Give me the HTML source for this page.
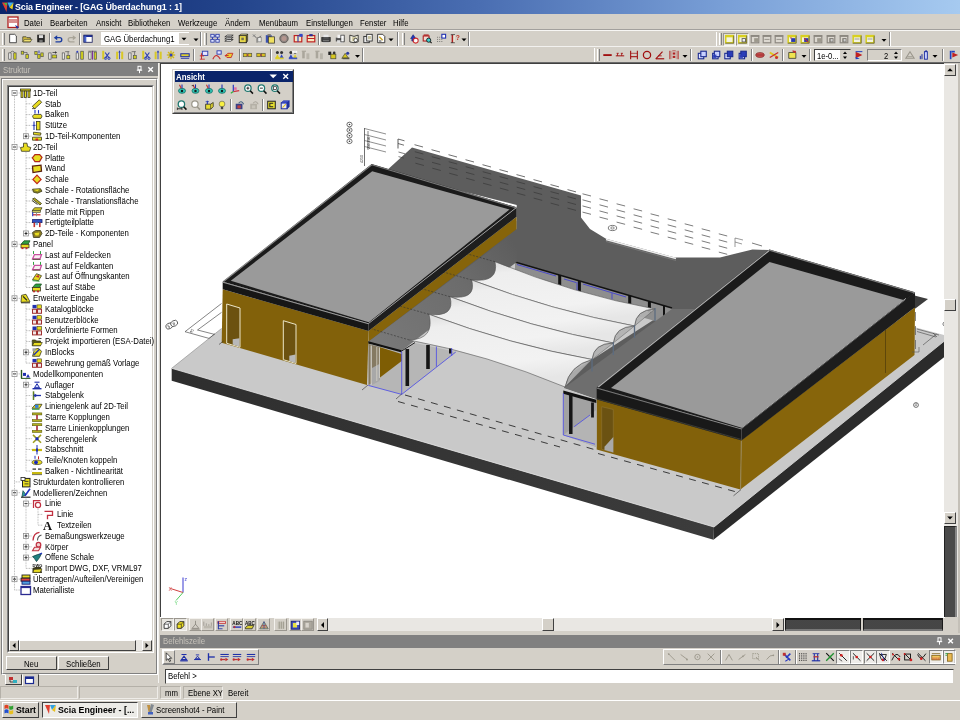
<!DOCTYPE html><html><head><meta charset="utf-8"><title>Scia Engineer - [GAG Überdachung1 : 1]</title><style>
html,body{margin:0;padding:0;}html{background:#d4d0c8;}
body{width:960px;height:720px;overflow:hidden;background:#d4d0c8;position:relative;filter:blur(0.42px);font-family:"Liberation Sans",sans-serif;}
div{position:absolute;box-sizing:border-box;}
.t{white-space:nowrap;line-height:10px;height:10px;}
.raised{border:1px solid;border-color:#fff #404040 #404040 #fff;background:#d4d0c8;}
.raised2{border:1px solid;border-color:#fff #808080 #808080 #fff;background:#d4d0c8;}
.sunken{border:1px solid;border-color:#9a968e #f6f5f2 #f6f5f2 #9a968e;}
.sep{width:2px;border-left:1px solid #808080;border-right:1px solid #fff;}
.grip{width:3px;border-left:1px solid #fff;border-right:1px solid #808080;}
svg{position:absolute;left:0;top:0;overflow:visible;}
</style></head><body>
<div style="left:0px;top:0px;width:960px;height:14px;background:linear-gradient(90deg,#0a246a 0%,#24458c 25%,#4a6eb2 50%,#789ed6 75%,#a6caf0 100%);"></div>
<div class="t" style="left:15px;top:2px;font-size:9.57px;color:#fff;transform:scaleX(0.93);transform-origin:0 50%;font-weight:bold;letter-spacing:-0.1px;">Scia Engineer - [GAG Überdachung1 : 1]</div>
<div style="left:0px;top:14px;width:960px;height:16px;background:#d4d0c8;"></div>
<div style="left:0px;top:29px;width:960px;height:1px;background:#808080;opacity:.6"></div>
<div style="left:0px;top:30px;width:960px;height:1px;background:#fff;opacity:.8"></div>
<div class="t" style="left:24px;top:18px;font-size:8.81px;color:#000;transform:scaleX(0.885);transform-origin:0 50%;">Datei</div>
<div class="t" style="left:50px;top:18px;font-size:8.81px;color:#000;transform:scaleX(0.885);transform-origin:0 50%;">Bearbeiten</div>
<div class="t" style="left:95.5px;top:18px;font-size:8.81px;color:#000;transform:scaleX(0.885);transform-origin:0 50%;">Ansicht</div>
<div class="t" style="left:128px;top:18px;font-size:8.81px;color:#000;transform:scaleX(0.885);transform-origin:0 50%;">Bibliotheken</div>
<div class="t" style="left:178px;top:18px;font-size:8.81px;color:#000;transform:scaleX(0.885);transform-origin:0 50%;">Werkzeuge</div>
<div class="t" style="left:225px;top:18px;font-size:8.81px;color:#000;transform:scaleX(0.885);transform-origin:0 50%;">Ändern</div>
<div class="t" style="left:258.5px;top:18px;font-size:8.81px;color:#000;transform:scaleX(0.885);transform-origin:0 50%;">Menübaum</div>
<div class="t" style="left:306px;top:18px;font-size:8.81px;color:#000;transform:scaleX(0.885);transform-origin:0 50%;">Einstellungen</div>
<div class="t" style="left:359.5px;top:18px;font-size:8.81px;color:#000;transform:scaleX(0.885);transform-origin:0 50%;">Fenster</div>
<div class="t" style="left:393px;top:18px;font-size:8.81px;color:#000;transform:scaleX(0.885);transform-origin:0 50%;">Hilfe</div>
<div style="left:0px;top:46px;width:960px;height:1px;background:#fff;opacity:.7"></div>
<div style="left:0px;top:62px;width:960px;height:1px;background:#6a6a6a;"></div>
<div class="grip" style="left:2px;top:33px;width:3px;height:12px;"></div>
<div class="sep" style="left:49px;top:33px;width:2px;height:12px;"></div>
<div class="sep" style="left:79px;top:33px;width:2px;height:12px;"></div>
<div style="left:101px;top:32px;width:88px;height:13px;background:#fff;"></div>
<div class="t" style="left:104px;top:34px;font-size:8.81px;color:#000;transform:scaleX(0.885);transform-origin:0 50%;">GAG Überdachung1</div>
<div style="left:179px;top:33px;width:10px;height:11px;background:#d4d0c8;"></div>
<div style="left:200px;top:32px;width:1px;height:14px;background:#808080"></div>
<div style="left:201px;top:32px;width:1px;height:14px;background:#fff"></div>
<div class="grip" style="left:204px;top:33px;width:3px;height:12px;"></div>
<div class="sep" style="left:318px;top:33px;width:2px;height:12px;"></div>
<div style="left:397px;top:32px;width:1px;height:14px;background:#808080"></div>
<div style="left:398px;top:32px;width:1px;height:14px;background:#fff"></div>
<div class="grip" style="left:402px;top:33px;width:3px;height:12px;"></div>
<div style="left:468px;top:32px;width:1px;height:14px;background:#808080"></div>
<div style="left:469px;top:32px;width:1px;height:14px;background:#fff"></div>
<div style="left:716px;top:32px;width:1px;height:14px;background:#fff"></div>
<div class="grip" style="left:719px;top:33px;width:3px;height:12px;"></div>
<div class="sunken" style="left:723px;top:33px;width:13px;height:13px;background:#e4e2dc;"></div>
<div class="sunken" style="left:736px;top:33px;width:13px;height:13px;background:#e4e2dc;"></div>
<div style="left:889px;top:32px;width:1px;height:14px;background:#808080"></div>
<div style="left:890px;top:32px;width:1px;height:14px;background:#fff"></div>
<div class="grip" style="left:2px;top:49px;width:3px;height:12px;"></div>
<div class="sep" style="left:193px;top:49px;width:2px;height:12px;"></div>
<div class="sep" style="left:239px;top:49px;width:2px;height:12px;"></div>
<div class="sep" style="left:270px;top:49px;width:2px;height:12px;"></div>
<div style="left:362px;top:48px;width:1px;height:14px;background:#808080"></div>
<div style="left:363px;top:48px;width:1px;height:14px;background:#fff"></div>
<div style="left:594px;top:48px;width:1px;height:14px;background:#fff"></div>
<div class="grip" style="left:597px;top:49px;width:3px;height:12px;"></div>
<div class="sep" style="left:690px;top:49px;width:2px;height:12px;"></div>
<div class="sep" style="left:751px;top:49px;width:2px;height:12px;"></div>
<div class="sep" style="left:782px;top:49px;width:2px;height:12px;"></div>
<div class="sep" style="left:809px;top:49px;width:2px;height:12px;"></div>
<div class="sep" style="left:942px;top:49px;width:2px;height:12px;"></div>
<div style="left:814px;top:49px;width:37px;height:12px;background:#fff;border:1px solid #404040;border-right-color:#d4d0c8;border-bottom-color:#d4d0c8;"></div>
<div class="t" style="left:817px;top:50.5px;font-size:8.60px;color:#000;transform:scaleX(0.885);transform-origin:0 50%;">1e-0...</div>
<div style="left:840px;top:50px;width:10px;height:10px;background:#d4d0c8;"></div>
<div style="left:867px;top:49px;width:35px;height:12px;background:#d4d0c8;border:1px solid #808080;border-right-color:#fff;border-bottom-color:#fff;"></div>
<div class="t" style="left:884px;top:50.5px;font-size:8.60px;color:#000;transform:scaleX(0.885);transform-origin:0 50%;">2</div>
<div style="left:891px;top:50px;width:10px;height:10px;background:#d4d0c8;"></div>
<div style="left:0px;top:63px;width:158px;height:13px;background:#808080;"></div>
<div class="t" style="left:3px;top:64.5px;font-size:8.81px;color:#c6c2ba;transform:scaleX(0.885);transform-origin:0 50%;">Struktur</div>
<div style="left:1px;top:78px;width:157px;height:597px;border:1px solid;border-color:#808080 #fff #fff #808080;"></div>
<div style="left:2px;top:79px;width:155px;height:595px;border:1px solid;border-color:#fff #808080 #808080 #fff;"></div>
<div style="left:7px;top:85px;width:147px;height:568px;border:1px solid;border-color:#808080 #fff #fff #808080;background:#fff;"></div>
<div style="left:8px;top:86px;width:145px;height:566px;border:1px solid;border-color:#404040 #d4d0c8 #d4d0c8 #404040;background:#fff;"></div>
<div style="left:9px;top:640px;width:143px;height:11px;background:#e9e7e3;"></div>
<div class="raised" style="left:9px;top:640px;width:10px;height:11px;"></div>
<div class="raised" style="left:142px;top:640px;width:10px;height:11px;"></div>
<div class="raised" style="left:19px;top:640px;width:117px;height:11px;"></div>
<div class="raised" style="left:6px;top:656px;width:51px;height:14px;"></div>
<div class="raised" style="left:58px;top:656px;width:51px;height:14px;"></div>
<div class="t" style="left:24px;top:658.5px;font-size:8.81px;color:#000;transform:scaleX(0.885);transform-origin:0 50%;">Neu</div>
<div class="t" style="left:66px;top:658.5px;font-size:8.81px;color:#000;transform:scaleX(0.885);transform-origin:0 50%;">Schließen</div>
<div style="left:5px;top:674px;width:17px;height:11px;border:1px solid;border-color:#d4d0c8 #404040 #404040 #fff;background:#d4d0c8;"></div>
<div style="left:22px;top:674px;width:17px;height:12.5px;border:1px solid;border-color:#d4d0c8 #404040 #404040 #fff;background:#d4d0c8;"></div>
<div class="t" style="left:33px;top:87.8px;font-size:8.81px;color:#000;transform:scaleX(0.885);transform-origin:0 50%;">1D-Teil</div>
<div class="t" style="left:44.5px;top:98.604px;font-size:8.81px;color:#000;transform:scaleX(0.885);transform-origin:0 50%;">Stab</div>
<div class="t" style="left:44.5px;top:109.408px;font-size:8.81px;color:#000;transform:scaleX(0.885);transform-origin:0 50%;">Balken</div>
<div class="t" style="left:44.5px;top:120.212px;font-size:8.81px;color:#000;transform:scaleX(0.885);transform-origin:0 50%;">Stütze</div>
<div class="t" style="left:44.5px;top:131.01600000000002px;font-size:8.81px;color:#000;transform:scaleX(0.885);transform-origin:0 50%;">1D-Teil-Komponenten</div>
<div class="t" style="left:33px;top:141.82000000000002px;font-size:8.81px;color:#000;transform:scaleX(0.885);transform-origin:0 50%;">2D-Teil</div>
<div class="t" style="left:44.5px;top:152.62400000000002px;font-size:8.81px;color:#000;transform:scaleX(0.885);transform-origin:0 50%;">Platte</div>
<div class="t" style="left:44.5px;top:163.428px;font-size:8.81px;color:#000;transform:scaleX(0.885);transform-origin:0 50%;">Wand</div>
<div class="t" style="left:44.5px;top:174.23200000000003px;font-size:8.81px;color:#000;transform:scaleX(0.885);transform-origin:0 50%;">Schale</div>
<div class="t" style="left:44.5px;top:185.036px;font-size:8.81px;color:#000;transform:scaleX(0.885);transform-origin:0 50%;">Schale - Rotationsfläche</div>
<div class="t" style="left:44.5px;top:195.84000000000003px;font-size:8.81px;color:#000;transform:scaleX(0.885);transform-origin:0 50%;">Schale - Translationsfläche</div>
<div class="t" style="left:44.5px;top:206.644px;font-size:8.81px;color:#000;transform:scaleX(0.885);transform-origin:0 50%;">Platte mit Rippen</div>
<div class="t" style="left:44.5px;top:217.448px;font-size:8.81px;color:#000;transform:scaleX(0.885);transform-origin:0 50%;">Fertigteilplatte</div>
<div class="t" style="left:44.5px;top:228.252px;font-size:8.81px;color:#000;transform:scaleX(0.885);transform-origin:0 50%;">2D-Teile - Komponenten</div>
<div class="t" style="left:33px;top:239.056px;font-size:8.81px;color:#000;transform:scaleX(0.885);transform-origin:0 50%;">Panel</div>
<div class="t" style="left:44.5px;top:249.86px;font-size:8.81px;color:#000;transform:scaleX(0.885);transform-origin:0 50%;">Last auf Feldecken</div>
<div class="t" style="left:44.5px;top:260.66400000000004px;font-size:8.81px;color:#000;transform:scaleX(0.885);transform-origin:0 50%;">Last auf Feldkanten</div>
<div class="t" style="left:44.5px;top:271.468px;font-size:8.81px;color:#000;transform:scaleX(0.885);transform-origin:0 50%;">Last auf Öffnungskanten</div>
<div class="t" style="left:44.5px;top:282.272px;font-size:8.81px;color:#000;transform:scaleX(0.885);transform-origin:0 50%;">Last auf Stäbe</div>
<div class="t" style="left:33px;top:293.076px;font-size:8.81px;color:#000;transform:scaleX(0.885);transform-origin:0 50%;">Erweiterte Eingabe</div>
<div class="t" style="left:44.5px;top:303.88000000000005px;font-size:8.81px;color:#000;transform:scaleX(0.885);transform-origin:0 50%;">Katalogblöcke</div>
<div class="t" style="left:44.5px;top:314.684px;font-size:8.81px;color:#000;transform:scaleX(0.885);transform-origin:0 50%;">Benutzerblöcke</div>
<div class="t" style="left:44.5px;top:325.488px;font-size:8.81px;color:#000;transform:scaleX(0.885);transform-origin:0 50%;">Vordefinierte Formen</div>
<div class="t" style="left:44.5px;top:336.29200000000003px;font-size:8.81px;color:#000;transform:scaleX(0.885);transform-origin:0 50%;">Projekt importieren (ESA-Datei)</div>
<div class="t" style="left:44.5px;top:347.096px;font-size:8.81px;color:#000;transform:scaleX(0.885);transform-origin:0 50%;">InBlocks</div>
<div class="t" style="left:44.5px;top:357.90000000000003px;font-size:8.81px;color:#000;transform:scaleX(0.885);transform-origin:0 50%;">Bewehrung gemäß Vorlage</div>
<div class="t" style="left:33px;top:368.704px;font-size:8.81px;color:#000;transform:scaleX(0.885);transform-origin:0 50%;">Modellkomponenten</div>
<div class="t" style="left:44.5px;top:379.50800000000004px;font-size:8.81px;color:#000;transform:scaleX(0.885);transform-origin:0 50%;">Auflager</div>
<div class="t" style="left:44.5px;top:390.312px;font-size:8.81px;color:#000;transform:scaleX(0.885);transform-origin:0 50%;">Stabgelenk</div>
<div class="t" style="left:44.5px;top:401.11600000000004px;font-size:8.81px;color:#000;transform:scaleX(0.885);transform-origin:0 50%;">Liniengelenk auf 2D-Teil</div>
<div class="t" style="left:44.5px;top:411.92px;font-size:8.81px;color:#000;transform:scaleX(0.885);transform-origin:0 50%;">Starre Kopplungen</div>
<div class="t" style="left:44.5px;top:422.72400000000005px;font-size:8.81px;color:#000;transform:scaleX(0.885);transform-origin:0 50%;">Starre Linienkopplungen</div>
<div class="t" style="left:44.5px;top:433.528px;font-size:8.81px;color:#000;transform:scaleX(0.885);transform-origin:0 50%;">Scherengelenk</div>
<div class="t" style="left:44.5px;top:444.332px;font-size:8.81px;color:#000;transform:scaleX(0.885);transform-origin:0 50%;">Stabschnitt</div>
<div class="t" style="left:44.5px;top:455.136px;font-size:8.81px;color:#000;transform:scaleX(0.885);transform-origin:0 50%;">Teile/Knoten koppeln</div>
<div class="t" style="left:44.5px;top:465.94px;font-size:8.81px;color:#000;transform:scaleX(0.885);transform-origin:0 50%;">Balken - Nichtlinearität</div>
<div class="t" style="left:33px;top:476.744px;font-size:8.81px;color:#000;transform:scaleX(0.885);transform-origin:0 50%;">Strukturdaten kontrollieren</div>
<div class="t" style="left:33px;top:487.548px;font-size:8.81px;color:#000;transform:scaleX(0.885);transform-origin:0 50%;">Modellieren/Zeichnen</div>
<div class="t" style="left:44.5px;top:498.35200000000003px;font-size:8.81px;color:#000;transform:scaleX(0.885);transform-origin:0 50%;">Linie</div>
<div class="t" style="left:56.5px;top:509.156px;font-size:8.81px;color:#000;transform:scaleX(0.885);transform-origin:0 50%;">Linie</div>
<div class="t" style="left:56.5px;top:519.96px;font-size:8.81px;color:#000;transform:scaleX(0.885);transform-origin:0 50%;">Textzeilen</div>
<div class="t" style="left:44.5px;top:530.7639999999999px;font-size:8.81px;color:#000;transform:scaleX(0.885);transform-origin:0 50%;">Bemaßungswerkzeuge</div>
<div class="t" style="left:44.5px;top:541.568px;font-size:8.81px;color:#000;transform:scaleX(0.885);transform-origin:0 50%;">Körper</div>
<div class="t" style="left:44.5px;top:552.372px;font-size:8.81px;color:#000;transform:scaleX(0.885);transform-origin:0 50%;">Offene Schale</div>
<div class="t" style="left:44.5px;top:563.1759999999999px;font-size:8.81px;color:#000;transform:scaleX(0.885);transform-origin:0 50%;">Import DWG, DXF, VRML97</div>
<div class="t" style="left:33px;top:573.98px;font-size:8.81px;color:#000;transform:scaleX(0.885);transform-origin:0 50%;">Übertragen/Aufteilen/Vereinigen</div>
<div class="t" style="left:33px;top:584.784px;font-size:8.81px;color:#000;transform:scaleX(0.885);transform-origin:0 50%;">Materialliste</div>
<div style="left:160px;top:63px;width:784px;height:570px;background:#d4d0c8;border-left:1px solid #404040;"></div>
<div style="left:160px;top:63px;width:784px;height:555px;background:#fff;border:1px solid #404040;border-right:none;border-bottom:none;"></div>
<div style="left:158px;top:63px;width:1px;height:620px;background:#f4f3f0;"></div>
<div style="left:944px;top:64px;width:14.3px;height:554px;background:#e9e7e3;"></div>
<div class="raised" style="left:944px;top:64px;width:12px;height:12px;"></div>
<div class="raised" style="left:944px;top:298.5px;width:12px;height:12px;"></div>
<div class="raised" style="left:944px;top:512px;width:12px;height:12px;"></div>
<div style="left:944px;top:526px;width:12.5px;height:92px;background:repeating-linear-gradient(0deg,#3a3a3a 0,#5a5a5a 1px,#3a3a3a 2px);border:1px solid #222;border-right:2px solid #888;"></div>
<div style="left:958.3px;top:63px;width:2px;height:570px;background:#c4c0b8;"></div>
<div style="left:159px;top:617px;width:799px;height:16px;background:#d4d0c8;"></div>
<div style="left:160px;top:617px;width:785px;height:1px;background:#fff;"></div>
<div class="sunken" style="left:161px;top:618px;width:12.5px;height:13px;background:#e6e4de;"></div>
<div class="sunken" style="left:174px;top:618px;width:13px;height:13px;background:#e6e4de;"></div>
<div style="left:188.9px;top:618.3px;width:13px;height:13px;border:1px solid;border-color:#f4f2ee #9a968e #9a968e #f4f2ee;"></div>
<div style="left:201.4px;top:618.3px;width:13px;height:13px;border:1px solid;border-color:#f4f2ee #9a968e #9a968e #f4f2ee;"></div>
<div style="left:215.1px;top:618.3px;width:13px;height:13px;border:1px solid;border-color:#f4f2ee #9a968e #9a968e #f4f2ee;"></div>
<div style="left:230.4px;top:618.3px;width:13px;height:13px;border:1px solid;border-color:#f4f2ee #9a968e #9a968e #f4f2ee;"></div>
<div style="left:243.0px;top:618.3px;width:13px;height:13px;border:1px solid;border-color:#f4f2ee #9a968e #9a968e #f4f2ee;"></div>
<div style="left:257.4px;top:618.3px;width:13px;height:13px;border:1px solid;border-color:#f4f2ee #9a968e #9a968e #f4f2ee;"></div>
<div style="left:274.4px;top:618.3px;width:13px;height:13px;border:1px solid;border-color:#f4f2ee #9a968e #9a968e #f4f2ee;"></div>
<div style="left:288.79999999999995px;top:618.3px;width:13px;height:13px;border:1px solid;border-color:#f4f2ee #9a968e #9a968e #f4f2ee;"></div>
<div style="left:301.4px;top:618.3px;width:13px;height:13px;border:1px solid;border-color:#f4f2ee #9a968e #9a968e #f4f2ee;"></div>
<div style="left:317px;top:618px;width:468px;height:13px;background:#e9e7e3;"></div>
<div class="raised" style="left:317px;top:618px;width:11px;height:13px;"></div>
<div class="raised" style="left:542px;top:618px;width:12px;height:13px;"></div>
<div class="raised" style="left:772px;top:618px;width:12px;height:13px;"></div>
<div style="left:785px;top:618px;width:76px;height:13px;background:repeating-linear-gradient(90deg,#333 0,#585858 1px,#333 2px);border:1px solid #1a1a1a;border-top:2px solid #111;border-bottom:2px solid #777;"></div>
<div style="left:863px;top:618px;width:80px;height:13px;background:repeating-linear-gradient(90deg,#333 0,#585858 1px,#333 2px);border:1px solid #1a1a1a;border-top:2px solid #111;border-bottom:2px solid #777;"></div>
<div style="left:160px;top:634.5px;width:800px;height:13px;background:#808080;"></div>
<div class="t" style="left:163px;top:636.3px;font-size:8.81px;color:#c6c2ba;transform:scaleX(0.885);transform-origin:0 50%;">Befehlszeile</div>
<div style="left:161.5px;top:649px;width:97px;height:16px;border:1px solid;border-color:#fff #808080 #808080 #fff;"></div>
<div style="left:162.5px;top:650px;width:12.5px;height:14px;border:1px solid;border-color:#fff #808080 #808080 #fff;"></div>
<div style="left:663px;top:649px;width:292px;height:16px;border:1px solid;border-color:#fff #808080 #808080 #fff;"></div>
<div style="left:836.2px;top:650px;width:13.4px;height:14px;border:1px solid;border-color:#808080 #fff #fff #808080;background:rgba(255,255,255,.6);"></div>
<div style="left:849.9000000000001px;top:650px;width:13.4px;height:14px;border:1px solid;border-color:#808080 #fff #fff #808080;background:rgba(255,255,255,.6);"></div>
<div style="left:863.6px;top:650px;width:13.4px;height:14px;border:1px solid;border-color:#808080 #fff #fff #808080;background:rgba(255,255,255,.6);"></div>
<div style="left:876.2px;top:650px;width:13.4px;height:14px;border:1px solid;border-color:#808080 #fff #fff #808080;background:rgba(255,255,255,.6);"></div>
<div style="left:929.2px;top:650px;width:13.4px;height:14px;border:1px solid;border-color:#808080 #fff #fff #808080;background:rgba(255,255,255,.6);"></div>
<div style="left:942.8000000000001px;top:650px;width:13.4px;height:14px;border:1px solid;border-color:#808080 #fff #fff #808080;background:rgba(255,255,255,.6);"></div>
<div class="sep" style="left:719.5px;top:650px;width:2px;height:14px;"></div>
<div class="sep" style="left:778px;top:650px;width:2px;height:14px;"></div>
<div class="sep" style="left:794.5px;top:650px;width:2px;height:14px;"></div>
<div style="left:165px;top:669px;width:789px;height:15px;background:#fff;border:1px solid;border-color:#404040 #d4d0c8 #d4d0c8 #404040;"></div>
<div class="t" style="left:168px;top:670.6px;font-size:8.81px;color:#000;transform:scaleX(0.885);transform-origin:0 50%;">Befehl &gt;</div>
<div style="left:0px;top:686px;width:78px;height:13px;border:1px solid;border-color:#b4b0a8 #eeece8 #eeece8 #b4b0a8;"></div>
<div style="left:79px;top:686px;width:79px;height:13px;border:1px solid;border-color:#b4b0a8 #eeece8 #eeece8 #b4b0a8;"></div>
<div style="left:160px;top:686px;width:21px;height:13px;border:1px solid;border-color:#b4b0a8 #eeece8 #eeece8 #b4b0a8;"></div>
<div style="left:183px;top:686px;width:40px;height:13px;border:1px solid;border-color:#b4b0a8 #eeece8 #eeece8 #b4b0a8;"></div>
<div class="t" style="left:165px;top:688px;font-size:8.81px;color:#000;transform:scaleX(0.885);transform-origin:0 50%;">mm</div>
<div class="t" style="left:188px;top:688px;font-size:8.81px;color:#000;transform:scaleX(0.885);transform-origin:0 50%;width:38.5px;overflow:hidden;">Ebene XY</div>
<div class="t" style="left:228px;top:688px;font-size:8.81px;color:#000;transform:scaleX(0.885);transform-origin:0 50%;">Bereit</div>
<div style="left:0px;top:700px;width:960px;height:20px;background:#d4d0c8;border-top:1px solid #fff;"></div>
<div class="raised" style="left:2px;top:702px;width:37px;height:16px;"></div>
<div class="t" style="left:16px;top:705px;font-size:9.46px;color:#000;transform:scaleX(0.93);transform-origin:0 50%;font-weight:bold;">Start</div>
<div style="left:42px;top:702px;width:96px;height:16px;border:1px solid;border-color:#404040 #fff #fff #404040;background:#ecebe7;"></div>
<div class="t" style="left:58px;top:705px;font-size:9.46px;color:#000;transform:scaleX(0.93);transform-origin:0 50%;font-weight:bold;">Scia Engineer - [...</div>
<div class="raised" style="left:141px;top:702px;width:96px;height:16px;"></div>
<div class="t" style="left:156px;top:705px;font-size:8.81px;color:#000;transform:scaleX(0.885);transform-origin:0 50%;">Screenshot4 - Paint</div>
<div style="left:172px;top:69px;width:122px;height:45px;background:#d4d0c8;border:1px solid;border-color:#d4d0c8 #404040 #404040 #d4d0c8;"></div>
<div style="left:173px;top:70px;width:120px;height:43px;border:1px solid;border-color:#fff #808080 #808080 #fff;"></div>
<div style="left:174.5px;top:71px;width:118px;height:11px;background:#0a246a;"></div>
<div class="t" style="left:175.8px;top:71.5px;font-size:8.49px;color:#fff;transform:scaleX(0.93);transform-origin:0 50%;font-weight:bold;">Ansicht</div>
<div class="sep" style="left:230px;top:99px;width:2px;height:12px;"></div>
<div class="sep" style="left:262px;top:99px;width:2px;height:12px;"></div>
<svg width="960" height="720" viewBox="0 0 960 720"><defs><clipPath id="vp"><rect x="160" y="64" width="784" height="553.8"/></clipPath><linearGradient id="sl1" x1="0" y1="0" x2="1" y2="0"><stop offset="0" stop-color="#2e2e2e"/><stop offset="1" stop-color="#3c3c3c"/></linearGradient><linearGradient id="sailg" x1="0" y1="0" x2="0.25" y2="1"><stop offset="0" stop-color="#dadada"/><stop offset="0.2" stop-color="#eeeeee"/><stop offset="0.75" stop-color="#f2f2f2"/><stop offset="1" stop-color="#e6e6e6"/></linearGradient><linearGradient id="strip" gradientUnits="userSpaceOnUse" x1="385" y1="345" x2="516" y2="245"><stop offset="0" stop-color="#787878"/><stop offset="0.6" stop-color="#6c6c6c"/><stop offset="1" stop-color="#5d5d5d"/></linearGradient></defs><g clip-path="url(#vp)"><polygon points="171.7,368.3 714.0,527.0 950.0,336.5 479.0,211.0 300.0,265.0 221.5,328.5" fill="#c9c9c9" /><line x1="171.7" y1="368.3" x2="221.5" y2="328.5" stroke="#8a8a8a" stroke-width="0.6" opacity="1"/><polygon points="171.7,368.3 714.0,527.0 713.5,539.8 171.7,380.7" fill="url(#sl1)" /><polygon points="714.0,527.0 950.0,336.5 950.0,352.5 713.5,539.8" fill="#2b2b2b" /><line x1="171.7" y1="368.3" x2="714.0" y2="527.0" stroke="#e4e4e4" stroke-width="0.8" opacity="1"/><line x1="714.0" y1="527.0" x2="950.0" y2="336.5" stroke="#e0e0e0" stroke-width="0.8" opacity="1"/><polygon points="368.5,331.0 516.7,216.7 516.7,231.7 368.5,345.5" fill="#86640a" /><polygon points="516.7,229.0 516.7,205.0 385.0,172.0 412.0,147.5 581.0,195.5 581.0,217.5 590.0,229.0 606.0,238.7 675.0,257.5 720.0,257.5 735.0,253.7 752.5,249.5 768.7,250.0 800.0,270.0 640.0,430.0 596.7,399.0 564.0,387.5 568.0,375.0 672.0,308.0 515.0,261.7 400.0,350.7 368.3,341.7" fill="#5d5d5d" /><polygon points="905.0,290.0 915.4,295.7 928.0,299.0 915.4,308.5 905.0,308.0" fill="#3c3c3c" /><polygon points="515.0,262.0 672.0,308.0 672.0,326.0 515.0,280.0" fill="#8e8e8e" /><line x1="559.7" y1="275.1" x2="559.7" y2="286.1" stroke="#111" stroke-width="3" opacity="1"/><line x1="579.4" y1="280.9" x2="579.4" y2="291.9" stroke="#111" stroke-width="3" opacity="1"/><line x1="629.7" y1="295.6" x2="629.7" y2="306.6" stroke="#111" stroke-width="3" opacity="1"/><line x1="649.4" y1="301.4" x2="649.4" y2="312.4" stroke="#111" stroke-width="3" opacity="1"/><line x1="664.0" y1="306.0" x2="664.0" y2="318.0" stroke="#111" stroke-width="2" opacity="1"/><path d="M517,264.5 L556,276 M564,279 L576,282.5 M583,284 L626,297 M577,282 V291 M612,293 V301" fill="none" stroke="#3a3ad8" stroke-width="0.8" /><line x1="515.0" y1="262.0" x2="672.0" y2="308.0" stroke="#111" stroke-width="1.6" opacity="1"/><polygon points="368.3,341.7 516.7,230.5 516.7,262.0 401.7,350.7" fill="url(#strip)" /><polygon points="368.5,344.0 401.7,352.0 415.0,343.0 456.0,352.0 401.7,394.4 368.5,385.4" fill="#b6b6b6" /><polygon points="379.4,347.0 401.7,354.0 401.7,361.0 379.4,378.0" fill="#7e5d04" /><polygon points="368.5,344.0 379.4,347.0 379.4,380.0 368.5,385.0" fill="#857a62" /><polygon points="372.0,368.0 379.4,364.0 379.4,381.0 372.0,385.0" fill="#a8a8a8" /><polygon points="564.0,388.0 672.0,309.0 700.0,309.0 600.0,400.0" fill="#6e6e6e" /><path d="M655,309 Q635.8,309.5 634.5,326 Z" fill="#b2b2b2" stroke="#555" stroke-width="0.5" opacity="0.9"/><path d="M634.5,326 Q614.9,326.5 613.3,343 Z" fill="#b2b2b2" stroke="#555" stroke-width="0.5" opacity="0.9"/><path d="M613.3,343 Q593.6,343.2 592,359.5 Z" fill="#b2b2b2" stroke="#555" stroke-width="0.5" opacity="0.9"/><path d="M592,359.5 Q569.5,365.2 565,387 Z" fill="#b2b2b2" stroke="#555" stroke-width="0.5" opacity="0.9"/><path d="M495,261.7 Q575.0,294.4 655,309 Q635.8,309.5 634.5,326 Q553.1,311.0 471.7,280 Q499.4,282.9 495,261.7Z" fill="url(#sailg)" stroke="#555" stroke-width="0.6" /><path d="M471.7,280 Q553.1,311.0 634.5,326 Q614.9,326.5 613.3,343 Q531.6,327.9 450,296.7 Q476.9,300.4 471.7,280Z" fill="url(#sailg)" stroke="#555" stroke-width="0.6" /><path d="M450,296.7 Q531.6,327.9 613.3,343 Q593.6,343.2 592,359.5 Q510.5,344.9 429,314.3 Q455.5,317.5 450,296.7Z" fill="url(#sailg)" stroke="#555" stroke-width="0.6" /><path d="M429,314.3 Q510.5,344.9 592,359.5 Q569.5,365.2 565,387 Q487.1,354.5 409.3,340 Q435.1,339.1 429,314.3Z" fill="url(#sailg)" stroke="#555" stroke-width="0.6" /><line x1="655.0" y1="308.0" x2="655.0" y2="321.0" stroke="#5c6c80" stroke-width="1.3" opacity="1"/><line x1="634.5" y1="325.0" x2="634.5" y2="338.0" stroke="#5c6c80" stroke-width="1.3" opacity="1"/><line x1="613.3" y1="342.0" x2="613.3" y2="355.0" stroke="#5c6c80" stroke-width="1.3" opacity="1"/><line x1="592.0" y1="358.5" x2="592.0" y2="371.5" stroke="#5c6c80" stroke-width="1.3" opacity="1"/><line x1="495.0" y1="261.7" x2="463.0" y2="252.7" stroke="#333" stroke-width="0.6" stroke-dasharray="2,1.5" opacity="1"/><line x1="471.7" y1="280.0" x2="439.7" y2="271.0" stroke="#333" stroke-width="0.6" stroke-dasharray="2,1.5" opacity="1"/><line x1="450.0" y1="296.7" x2="418.0" y2="287.7" stroke="#333" stroke-width="0.6" stroke-dasharray="2,1.5" opacity="1"/><line x1="429.0" y1="314.3" x2="397.0" y2="305.3" stroke="#333" stroke-width="0.6" stroke-dasharray="2,1.5" opacity="1"/><line x1="409.3" y1="340.0" x2="372.0" y2="329.0" stroke="#333" stroke-width="0.6" stroke-dasharray="2,1.5" opacity="1"/><polygon points="222.7,289.3 368.5,331.0 367.0,385.0 221.7,342.7" fill="#82610a" /><polygon points="226.7,304.0 240.0,308.0 240.0,347.3 226.7,343.3" fill="#6c5210" stroke="#ece6c8" stroke-width="1" /><polygon points="232.7,339.3 239.5,338.3 239.5,346.8 232.7,344.5" fill="#b8b8b8" /><polygon points="283.3,320.7 296.0,324.5 296.0,363.5 283.3,359.7" fill="#6c5210" stroke="#ece6c8" stroke-width="1" /><polygon points="289.3,355.7 295.5,354.5 295.5,363.0 289.3,360.9" fill="#b8b8b8" /><polygon points="222.7,281.7 371.7,164.0 516.7,207.3 368.5,323.5" fill="#1b1b1b" /><polygon points="222.7,281.7 368.5,323.5 368.5,331.0 222.7,289.3" fill="#161616" /><polygon points="368.5,323.5 516.7,207.3 516.7,216.7 368.5,331.0" fill="#1e1e1e" /><polygon points="230.8,280.8 372.2,171.2 509.5,209.5 368.8,322.3" fill="#9a9a9a" /><line x1="223.5" y1="281.5" x2="371.7" y2="164.9" stroke="#8c8c8c" stroke-width="1.2" opacity="1"/><line x1="371.7" y1="164.7" x2="516.7" y2="208.0" stroke="#787878" stroke-width="1.2" opacity="1"/><line x1="222.7" y1="282.2" x2="368.5" y2="323.8" stroke="#b8b8b8" stroke-width="0.8" opacity="1"/><line x1="368.5" y1="323.5" x2="516.7" y2="207.3" stroke="#b0b0b0" stroke-width="0.8" opacity="1"/><polygon points="368.3,341.2 401.7,350.2 401.7,352.6 368.3,343.6" fill="#111" /><line x1="401.7" y1="351.0" x2="415.0" y2="342.6" stroke="#222" stroke-width="1" opacity="1"/><line x1="407.3" y1="349.0" x2="407.3" y2="386.0" stroke="#151515" stroke-width="3.6" opacity="1"/><line x1="428.0" y1="345.0" x2="428.0" y2="369.0" stroke="#151515" stroke-width="3.6" opacity="1"/><line x1="450.3" y1="348.6" x2="450.3" y2="353.5" stroke="#151515" stroke-width="2.6" opacity="1"/><line x1="371.2" y1="345.5" x2="371.2" y2="384.5" stroke="#ececec" stroke-width="0.9" opacity="1"/><line x1="376.8" y1="347.0" x2="376.8" y2="381.0" stroke="#d8d4c8" stroke-width="0.8" opacity="1"/><line x1="379.4" y1="347.5" x2="379.4" y2="378.0" stroke="#e0e0e0" stroke-width="0.8" opacity="1"/><path d="M368.3,385.4 L401.7,394.4 L401.7,351.4 M401.7,394.4 L455.8,352 M436.4,346.5 V366.7 M451.7,348 V356" fill="none" stroke="#4848e8" stroke-width="0.8" /><polygon points="596.7,399.0 741.5,440.0 740.4,489.6 596.7,449.5" fill="#82610a" /><polygon points="741.5,440.0 915.0,307.2 914.5,355.0 740.4,489.6" fill="#87650b" /><line x1="741.3" y1="441.0" x2="740.6" y2="489.0" stroke="#9a8a60" stroke-width="0.9" opacity="1"/><line x1="885.5" y1="330.0" x2="885.5" y2="373.0" stroke="#54400a" stroke-width="0.8" opacity="1"/><polygon points="601.7,406.7 613.3,409.5 613.3,452.5 601.7,449.3" fill="#6b5212" stroke="#8e7636" stroke-width="0.6" /><polygon points="604.5,446.7 613.3,437.0 613.3,452.5 604.5,450.0" fill="#a9a9a9" /><polygon points="596.7,387.5 769.3,249.5 915.0,292.3 741.5,429.0" fill="#1b1b1b" /><polygon points="596.7,387.5 741.5,429.0 741.5,440.5 596.7,399.6" fill="#191919" /><polygon points="741.5,429.0 915.0,292.3 915.0,307.2 741.5,440.5" fill="#1d1d1d" /><polygon points="611.0,387.9 769.5,262.0 903.5,300.0 741.5,427.8" fill="#9a9a9a" /><line x1="598.2" y1="387.0" x2="769.3" y2="250.5" stroke="#b4b4b4" stroke-width="1.1" opacity="1"/><line x1="769.3" y1="250.2" x2="915.0" y2="293.0" stroke="#808080" stroke-width="1.2" opacity="1"/><line x1="596.7" y1="388.1" x2="741.5" y2="429.0" stroke="#a0a0a0" stroke-width="0.7" opacity="1"/><line x1="741.5" y1="428.0" x2="906.0" y2="298.3" stroke="#c4c4c4" stroke-width="0.8" opacity="1"/><line x1="596.7" y1="398.8" x2="741.5" y2="439.5" stroke="#4a4a40" stroke-width="0.7" opacity="1"/><polygon points="563.3,393.0 596.3,402.0 596.3,447.0 563.3,435.0" fill="#a2a2a2" /><polygon points="574.2,426.7 596.3,410.0 596.3,447.0 563.3,435.0" fill="#b4b4b4" /><polygon points="563.3,390.5 596.3,399.8 596.3,403.0 563.3,393.8" fill="#111" /><line x1="570.8" y1="394.0" x2="570.8" y2="434.0" stroke="#151515" stroke-width="3.5" opacity="1"/><line x1="592.5" y1="402.5" x2="592.5" y2="417.5" stroke="#151515" stroke-width="2.8" opacity="1"/><path d="M563.3,393.3 V435 L595,444.2 M574.2,426.7 L590,415" fill="none" stroke="#4848e8" stroke-width="0.8" /><line x1="405.0" y1="395.0" x2="596.0" y2="450.0" stroke="#2a2a2a" stroke-width="0.9" stroke-dasharray="7,6.5" opacity="1"/><line x1="398.0" y1="401.5" x2="560.0" y2="447.0" stroke="#2a2a2a" stroke-width="0.9" stroke-dasharray="7,6.5" opacity="1"/><line x1="598.0" y1="453.5" x2="735.5" y2="491.7" stroke="#2a2a2a" stroke-width="0.9" stroke-dasharray="7,6.5" opacity="1"/><line x1="733.5" y1="495.8" x2="741.0" y2="489.6" stroke="#333" stroke-width="0.6" opacity="1"/><line x1="368.0" y1="385.0" x2="362.0" y2="390.0" stroke="#333" stroke-width="0.6" opacity="1"/><line x1="401.7" y1="394.0" x2="396.0" y2="399.0" stroke="#333" stroke-width="0.6" opacity="1"/><line x1="414.5" y1="144.7" x2="423.0" y2="147.0" stroke="#333" stroke-width="0.7" opacity="1"/><line x1="431.5" y1="149.7" x2="440.0" y2="152.0" stroke="#333" stroke-width="0.7" opacity="1"/><line x1="448.5" y1="154.7" x2="457.0" y2="157.0" stroke="#333" stroke-width="0.7" opacity="1"/><line x1="465.5" y1="159.7" x2="474.0" y2="162.0" stroke="#333" stroke-width="0.7" opacity="1"/><line x1="482.5" y1="164.7" x2="491.0" y2="167.0" stroke="#333" stroke-width="0.7" opacity="1"/><line x1="499.5" y1="169.6" x2="508.0" y2="171.9" stroke="#333" stroke-width="0.7" opacity="1"/><line x1="516.5" y1="174.6" x2="525.0" y2="176.9" stroke="#333" stroke-width="0.7" opacity="1"/><line x1="533.5" y1="179.6" x2="542.0" y2="181.9" stroke="#333" stroke-width="0.7" opacity="1"/><line x1="550.5" y1="184.6" x2="559.0" y2="186.9" stroke="#333" stroke-width="0.7" opacity="1"/><line x1="567.5" y1="189.6" x2="576.0" y2="191.9" stroke="#333" stroke-width="0.7" opacity="1"/><line x1="414.8" y1="151.7" x2="423.3" y2="154.0" stroke="#383838" stroke-width="0.7" opacity="1"/><line x1="431.8" y1="156.7" x2="440.3" y2="159.0" stroke="#383838" stroke-width="0.7" opacity="1"/><line x1="448.7" y1="161.7" x2="457.2" y2="164.0" stroke="#383838" stroke-width="0.7" opacity="1"/><line x1="465.7" y1="166.7" x2="474.2" y2="169.0" stroke="#383838" stroke-width="0.7" opacity="1"/><line x1="482.7" y1="171.7" x2="491.2" y2="174.0" stroke="#383838" stroke-width="0.7" opacity="1"/><line x1="499.6" y1="176.6" x2="508.1" y2="178.9" stroke="#383838" stroke-width="0.7" opacity="1"/><line x1="516.6" y1="181.6" x2="525.1" y2="183.9" stroke="#383838" stroke-width="0.7" opacity="1"/><line x1="533.6" y1="186.6" x2="542.1" y2="188.9" stroke="#383838" stroke-width="0.7" opacity="1"/><line x1="550.5" y1="191.6" x2="559.0" y2="193.9" stroke="#383838" stroke-width="0.7" opacity="1"/><line x1="567.5" y1="196.6" x2="576.0" y2="198.9" stroke="#383838" stroke-width="0.7" opacity="1"/><line x1="415.1" y1="157.3" x2="423.6" y2="159.6" stroke="#383838" stroke-width="0.7" opacity="1"/><line x1="432.0" y1="162.3" x2="440.5" y2="164.6" stroke="#383838" stroke-width="0.7" opacity="1"/><line x1="449.0" y1="167.3" x2="457.5" y2="169.6" stroke="#383838" stroke-width="0.7" opacity="1"/><line x1="465.9" y1="172.3" x2="474.4" y2="174.6" stroke="#383838" stroke-width="0.7" opacity="1"/><line x1="482.8" y1="177.3" x2="491.3" y2="179.6" stroke="#383838" stroke-width="0.7" opacity="1"/><line x1="499.8" y1="182.2" x2="508.3" y2="184.5" stroke="#383838" stroke-width="0.7" opacity="1"/><line x1="516.7" y1="187.2" x2="525.2" y2="189.5" stroke="#383838" stroke-width="0.7" opacity="1"/><line x1="533.6" y1="192.2" x2="542.1" y2="194.5" stroke="#383838" stroke-width="0.7" opacity="1"/><line x1="550.6" y1="197.2" x2="559.1" y2="199.5" stroke="#383838" stroke-width="0.7" opacity="1"/><line x1="567.5" y1="202.2" x2="576.0" y2="204.5" stroke="#383838" stroke-width="0.7" opacity="1"/><line x1="415.4" y1="163.2" x2="423.9" y2="165.5" stroke="#383838" stroke-width="0.7" opacity="1"/><line x1="432.3" y1="168.2" x2="440.8" y2="170.5" stroke="#383838" stroke-width="0.7" opacity="1"/><line x1="449.2" y1="173.2" x2="457.7" y2="175.5" stroke="#383838" stroke-width="0.7" opacity="1"/><line x1="466.1" y1="178.2" x2="474.6" y2="180.5" stroke="#383838" stroke-width="0.7" opacity="1"/><line x1="483.0" y1="183.2" x2="491.5" y2="185.5" stroke="#383838" stroke-width="0.7" opacity="1"/><line x1="499.9" y1="188.1" x2="508.4" y2="190.4" stroke="#383838" stroke-width="0.7" opacity="1"/><line x1="516.8" y1="193.1" x2="525.3" y2="195.4" stroke="#383838" stroke-width="0.7" opacity="1"/><line x1="533.7" y1="198.1" x2="542.2" y2="200.4" stroke="#383838" stroke-width="0.7" opacity="1"/><line x1="550.6" y1="203.1" x2="559.1" y2="205.4" stroke="#383838" stroke-width="0.7" opacity="1"/><line x1="567.5" y1="208.1" x2="576.0" y2="210.4" stroke="#383838" stroke-width="0.7" opacity="1"/><line x1="582.5" y1="193.8" x2="591.0" y2="196.0" stroke="#444" stroke-width="0.7" opacity="1"/><line x1="599.5" y1="198.8" x2="608.0" y2="201.0" stroke="#444" stroke-width="0.7" opacity="1"/><line x1="616.6" y1="203.8" x2="625.1" y2="206.0" stroke="#444" stroke-width="0.7" opacity="1"/><line x1="633.6" y1="208.8" x2="642.1" y2="211.0" stroke="#444" stroke-width="0.7" opacity="1"/><line x1="650.6" y1="213.8" x2="659.1" y2="216.0" stroke="#444" stroke-width="0.7" opacity="1"/><line x1="667.7" y1="218.8" x2="676.2" y2="221.0" stroke="#444" stroke-width="0.7" opacity="1"/><line x1="684.7" y1="223.8" x2="693.2" y2="226.0" stroke="#444" stroke-width="0.7" opacity="1"/><line x1="701.7" y1="228.8" x2="710.2" y2="231.0" stroke="#444" stroke-width="0.7" opacity="1"/><line x1="718.8" y1="233.8" x2="727.2" y2="236.0" stroke="#444" stroke-width="0.7" opacity="1"/><line x1="582.5" y1="199.8" x2="591.0" y2="202.1" stroke="#444" stroke-width="0.7" opacity="1"/><line x1="599.5" y1="204.8" x2="608.0" y2="207.1" stroke="#444" stroke-width="0.7" opacity="1"/><line x1="616.6" y1="209.8" x2="625.1" y2="212.1" stroke="#444" stroke-width="0.7" opacity="1"/><line x1="633.6" y1="214.8" x2="642.1" y2="217.1" stroke="#444" stroke-width="0.7" opacity="1"/><line x1="650.6" y1="219.8" x2="659.1" y2="222.1" stroke="#444" stroke-width="0.7" opacity="1"/><line x1="667.7" y1="224.8" x2="676.2" y2="227.1" stroke="#444" stroke-width="0.7" opacity="1"/><line x1="684.7" y1="229.8" x2="693.2" y2="232.1" stroke="#444" stroke-width="0.7" opacity="1"/><line x1="701.7" y1="234.8" x2="710.2" y2="237.1" stroke="#444" stroke-width="0.7" opacity="1"/><line x1="718.8" y1="239.8" x2="727.2" y2="242.1" stroke="#444" stroke-width="0.7" opacity="1"/><line x1="582.5" y1="205.9" x2="591.0" y2="208.2" stroke="#444" stroke-width="0.7" opacity="1"/><line x1="599.5" y1="210.9" x2="608.0" y2="213.2" stroke="#444" stroke-width="0.7" opacity="1"/><line x1="616.6" y1="215.9" x2="625.1" y2="218.2" stroke="#444" stroke-width="0.7" opacity="1"/><line x1="633.6" y1="220.9" x2="642.1" y2="223.2" stroke="#444" stroke-width="0.7" opacity="1"/><line x1="650.6" y1="225.9" x2="659.1" y2="228.2" stroke="#444" stroke-width="0.7" opacity="1"/><line x1="667.7" y1="230.9" x2="676.2" y2="233.2" stroke="#444" stroke-width="0.7" opacity="1"/><line x1="684.7" y1="235.9" x2="693.2" y2="238.2" stroke="#444" stroke-width="0.7" opacity="1"/><line x1="701.7" y1="240.9" x2="710.2" y2="243.2" stroke="#444" stroke-width="0.7" opacity="1"/><line x1="718.8" y1="245.9" x2="727.2" y2="248.2" stroke="#444" stroke-width="0.7" opacity="1"/><line x1="582.5" y1="212.1" x2="591.0" y2="214.3" stroke="#444" stroke-width="0.7" opacity="1"/><line x1="599.5" y1="217.1" x2="608.0" y2="219.3" stroke="#444" stroke-width="0.7" opacity="1"/><line x1="616.6" y1="222.1" x2="625.1" y2="224.3" stroke="#444" stroke-width="0.7" opacity="1"/><line x1="633.6" y1="227.1" x2="642.1" y2="229.3" stroke="#444" stroke-width="0.7" opacity="1"/><line x1="650.6" y1="232.1" x2="659.1" y2="234.3" stroke="#444" stroke-width="0.7" opacity="1"/><line x1="667.7" y1="237.1" x2="676.2" y2="239.3" stroke="#444" stroke-width="0.7" opacity="1"/><line x1="684.7" y1="242.1" x2="693.2" y2="244.3" stroke="#444" stroke-width="0.7" opacity="1"/><line x1="701.7" y1="247.1" x2="710.2" y2="249.3" stroke="#444" stroke-width="0.7" opacity="1"/><line x1="718.8" y1="252.1" x2="727.2" y2="254.3" stroke="#444" stroke-width="0.7" opacity="1"/><line x1="735.0" y1="238.0" x2="735.0" y2="247.0" stroke="#555" stroke-width="0.6" opacity="1"/><line x1="735.0" y1="238.0" x2="743.0" y2="240.0" stroke="#555" stroke-width="0.6" opacity="1"/><line x1="735.0" y1="242.0" x2="742.0" y2="244.0" stroke="#555" stroke-width="0.6" opacity="1"/><line x1="752.0" y1="243.0" x2="762.0" y2="246.0" stroke="#444" stroke-width="0.7" opacity="1"/><line x1="606.0" y1="239.5" x2="676.0" y2="258.5" stroke="#eee" stroke-width="1.6" opacity="1"/><line x1="606.0" y1="241.5" x2="676.0" y2="260.5" stroke="#888" stroke-width="0.6" opacity="1"/><ellipse cx="612.5" cy="228" rx="4.2" ry="2.6" fill="#fff" stroke="#444" stroke-width="0.7"/><ellipse cx="612.5" cy="228" rx="1.8" ry="1.1" fill="none" stroke="#444" stroke-width="0.6"/><ellipse cx="349.5" cy="124.5" rx="2.6" ry="2.3" fill="#fff" stroke="#333" stroke-width="0.7"/><circle cx="349.5" cy="124.5" r="0.8" fill="#333"/><ellipse cx="349.5" cy="130.1" rx="2.6" ry="2.3" fill="#fff" stroke="#333" stroke-width="0.7"/><circle cx="349.5" cy="130.1" r="0.8" fill="#333"/><ellipse cx="349.5" cy="135.7" rx="2.6" ry="2.3" fill="#fff" stroke="#333" stroke-width="0.7"/><circle cx="349.5" cy="135.7" r="0.8" fill="#333"/><ellipse cx="349.5" cy="141.3" rx="2.6" ry="2.3" fill="#fff" stroke="#333" stroke-width="0.7"/><circle cx="349.5" cy="141.3" r="0.8" fill="#333"/><line x1="364.5" y1="128.0" x2="364.5" y2="166.0" stroke="#333" stroke-width="0.7" opacity="1"/><line x1="368.0" y1="131.0" x2="368.0" y2="150.0" stroke="#333" stroke-width="0.6" opacity="1"/><line x1="364.5" y1="128.5" x2="386.0" y2="134.0" stroke="#444" stroke-width="0.6" opacity="1"/><line x1="364.5" y1="134.5" x2="386.0" y2="140.0" stroke="#444" stroke-width="0.6" opacity="1"/><line x1="364.5" y1="140.5" x2="386.0" y2="146.0" stroke="#444" stroke-width="0.6" opacity="1"/><line x1="364.5" y1="146.5" x2="386.0" y2="152.0" stroke="#444" stroke-width="0.6" opacity="1"/><line x1="398.0" y1="139.0" x2="398.0" y2="148.5" stroke="#333" stroke-width="0.8" opacity="1"/><line x1="398.0" y1="139.0" x2="404.5" y2="140.8" stroke="#333" stroke-width="0.7" opacity="1"/><line x1="398.0" y1="143.5" x2="404.0" y2="145.2" stroke="#333" stroke-width="0.7" opacity="1"/><line x1="398.5" y1="152.0" x2="405.0" y2="153.8" stroke="#444" stroke-width="0.7" opacity="1"/><line x1="398.5" y1="156.6" x2="404.0" y2="158.2" stroke="#444" stroke-width="0.7" opacity="1"/><text x="363" y="163" font-size="3.6" fill="#333" font-family="Liberation Sans, sans-serif" transform="rotate(-90 363 163)">4250</text><text x="370" y="149" font-size="3.4" fill="#333" font-family="Liberation Sans, sans-serif" transform="rotate(-90 370 149)">250 250</text><line x1="185.0" y1="331.7" x2="221.5" y2="303.5" stroke="#333" stroke-width="0.6" opacity="1"/><line x1="197.5" y1="330.0" x2="221.5" y2="312.4" stroke="#333" stroke-width="0.6" opacity="1"/><line x1="185.0" y1="331.7" x2="209.0" y2="338.4" stroke="#333" stroke-width="0.6" opacity="1"/><line x1="197.5" y1="330.0" x2="214.2" y2="334.3" stroke="#333" stroke-width="0.6" opacity="1"/><line x1="209.0" y1="338.4" x2="215.0" y2="333.7" stroke="#333" stroke-width="0.6" opacity="1"/><line x1="219.0" y1="344.5" x2="223.5" y2="341.0" stroke="#333" stroke-width="0.6" opacity="1"/><g transform="rotate(-28 171.5 324.8) translate(-0.5,1.8)"><ellipse cx="169.5" cy="323" rx="3.7" ry="2.8" fill="#fff" stroke="#333" stroke-width="0.7"/><ellipse cx="175" cy="323" rx="3.7" ry="2.8" fill="#fff" stroke="#333" stroke-width="0.7"/><text x="167.8" y="324.6" font-size="4.2" fill="#222" font-family="Liberation Sans, sans-serif">5</text><text x="173.3" y="324.6" font-size="4.2" fill="#222" font-family="Liberation Sans, sans-serif">8</text></g><text x="190.5" y="332.5" font-size="3.8" fill="#222" font-family="Liberation Sans, sans-serif" transform="rotate(-55 192 332)">45</text><line x1="915.5" y1="312.0" x2="915.5" y2="352.0" stroke="#555" stroke-width="0.7" stroke-dasharray="9,5" opacity="1"/><line x1="917.0" y1="329.0" x2="939.0" y2="335.0" stroke="#444" stroke-width="0.6" opacity="1"/><line x1="917.0" y1="331.5" x2="936.0" y2="337.0" stroke="#444" stroke-width="0.6" opacity="1"/><line x1="936.5" y1="334.0" x2="923.0" y2="345.0" stroke="#444" stroke-width="0.6" opacity="1"/><line x1="933.0" y1="333.0" x2="937.0" y2="337.0" stroke="#444" stroke-width="0.6" opacity="1"/><line x1="912.0" y1="352.0" x2="919.0" y2="352.0" stroke="#555" stroke-width="0.6" opacity="1"/><line x1="919.0" y1="347.0" x2="919.0" y2="352.0" stroke="#555" stroke-width="0.6" opacity="1"/><circle cx="916" cy="405" r="2.4" fill="#fff" stroke="#333" stroke-width="0.7"/><text x="914.7" y="406.4" font-size="3.6" fill="#222" font-family="Liberation Sans, sans-serif">4</text><path d="M944,322 q-2.5,2 0,4" fill="none" stroke="#444" stroke-width="0.7"/><line x1="183.0" y1="592.5" x2="183.0" y2="577.5" stroke="#3838d0" stroke-width="1" opacity="1"/><line x1="183.0" y1="592.5" x2="170.5" y2="588.5" stroke="#d04040" stroke-width="1" opacity="1"/><line x1="183.0" y1="592.5" x2="176.0" y2="600.5" stroke="#50d060" stroke-width="1" opacity="1"/><text x="184.5" y="580.5" font-size="5" fill="#3838d0" font-family="Liberation Sans, sans-serif">z</text><text x="168.6" y="590.8" font-size="5" fill="#d04040" font-family="Liberation Sans, sans-serif">X</text><text x="174.5" y="605" font-size="5" fill="#50d060" font-family="Liberation Sans, sans-serif">Y</text></g></svg>
<svg width="960" height="720" viewBox="0 0 960 720" style="pointer-events:none"><g transform="translate(13,38.5) scale(0.84) translate(-13,-38.5)"><polygon points="9.0,33.5 15.0,33.5 17.0,35.5 17.0,43.5 9.0,43.5" fill="#fff" stroke="#333" stroke-width="1" opacity="1"/></g><g transform="translate(27,38.5) scale(0.84) translate(-27,-38.5)"><polygon points="22.0,36.5 26.0,36.5 27.0,37.5 31.0,37.5 31.0,42.5 22.0,42.5" fill="#d8c040" stroke="#443" stroke-width="1" opacity="1"/><polygon points="24.0,39.5 33.0,39.5 31.0,42.5 22.0,42.5" fill="#f0e070" stroke="#443" stroke-width="0.8" opacity="1"/></g><g transform="translate(41,38.5) scale(0.84) translate(-41,-38.5)"><rect x="36.5" y="34.0" width="9" height="9" fill="#222" opacity="1" rx="0"/><rect x="38.5" y="34.5" width="5" height="3.5" fill="#ddd" opacity="1" rx="0"/><rect x="39.0" y="40.0" width="4" height="3" fill="#777" opacity="1" rx="0"/></g><g transform="translate(58,38.5) scale(0.84) translate(-58,-38.5)"><path d="M55,37.5 h5 a2.5,2.5 0 0 1 0,5 h-5" fill="none" stroke="#1a3ca0" stroke-width="1.6"/><polygon points="53.0,37.5 57.0,34.5 57.0,40.5" fill="#1a3ca0" stroke="none" stroke-width="1" opacity="1"/></g><g transform="translate(72,38.5) scale(0.84) translate(-72,-38.5)"><path d="M75,37.5 h-5 a2.5,2.5 0 0 0 0,5 h5" fill="none" stroke="#a8a498" stroke-width="1.6"/><polygon points="77.0,37.5 73.0,34.5 73.0,40.5" fill="#a8a498" stroke="none" stroke-width="1" opacity="1"/></g><g transform="translate(88,38.5) scale(0.84) translate(-88,-38.5)"><rect x="83.0" y="34.5" width="10" height="8.5" fill="#fff" opacity="1" rx="0"/><rect x="83.0" y="34.5" width="10" height="2.2" fill="#1a2c9c" opacity="1" rx="0"/><rect x="83.0" y="34.5" width="3" height="8.5" fill="#3a58c8" opacity="0.9" rx="0"/><rect x="83" y="34.5" width="10" height="8.5" fill="none" stroke="#1a2060" stroke-width="1"/></g><polygon points="181.5,37.7 186.5,37.7 184,40.5" fill="#000"/><polygon points="193.5,38.5 198.5,38.5 196,41.3" fill="#000"/><g transform="translate(215,38.5) scale(0.84) translate(-215,-38.5)"><rect x="210.0" y="33.5" width="4" height="3.5" fill="none" opacity="1" rx="0"/><rect x="210" y="33.5" width="4" height="3.4" fill="#dfe4ff" stroke="#2a3aa8" stroke-width="1"/><rect x="216" y="33.5" width="4" height="3.4" fill="#dfe4ff" stroke="#2a3aa8" stroke-width="1"/><rect x="210" y="39.5" width="4" height="3.4" fill="#dfe4ff" stroke="#2a3aa8" stroke-width="1"/><rect x="216" y="39.5" width="4" height="3.4" fill="#dfe4ff" stroke="#2a3aa8" stroke-width="1"/><line x1="214.0" y1="35.5" x2="216.0" y2="35.5" stroke="#2a3aa8" stroke-width="1.2" opacity="1"/><line x1="212.0" y1="37.0" x2="212.0" y2="39.5" stroke="#2a3aa8" stroke-width="1.2" opacity="1"/><line x1="218.0" y1="37.0" x2="218.0" y2="39.5" stroke="#2a3aa8" stroke-width="1.2" opacity="1"/></g><g transform="translate(229,38.5) scale(0.84) translate(-229,-38.5)"><polygon points="224.0,36.5 227.0,34.5 234.0,34.5 231.0,36.5" fill="#fff" stroke="#222" stroke-width="0.9" opacity="1"/><polygon points="224.0,39.1 227.0,37.1 234.0,37.1 231.0,39.1" fill="#fff" stroke="#222" stroke-width="0.9" opacity="1"/><polygon points="224.0,41.7 227.0,39.7 234.0,39.7 231.0,41.7" fill="#fff" stroke="#222" stroke-width="0.9" opacity="1"/></g><g transform="translate(243,38.5) scale(0.84) translate(-243,-38.5)"><rect x="238.5" y="35.0" width="8.5" height="8.5" fill="#e8d84a" opacity="1" rx="0"/><rect x="238.5" y="35.0" width="8.5" height="8.5" fill="none" stroke="#222" stroke-width="1.1"/><polygon points="238.5,35.0 240.5,33.3 248.5,33.3 247.0,35.0" fill="#f5ec90" stroke="#222" stroke-width="0.8" opacity="1"/><polygon points="247.0,35.0 248.5,33.3 248.5,41.5 247.0,43.5" fill="#b0a030" stroke="#222" stroke-width="0.8" opacity="1"/><rect x="241.0" y="37.5" width="3" height="3" fill="#555" opacity="0.8" rx="0"/></g><g transform="translate(257,38.5) scale(0.84) translate(-257,-38.5)"><line x1="253.0" y1="34.5" x2="257.0" y2="38.5" stroke="#666" stroke-width="1.1" opacity="1"/><line x1="257.0" y1="38.5" x2="257.0" y2="43.5" stroke="#666" stroke-width="1.1" opacity="1"/><line x1="257.0" y1="38.5" x2="262.0" y2="35.5" stroke="#666" stroke-width="1.1" opacity="1"/><rect x="258.0" y="37.5" width="4" height="5" fill="#eee" opacity="0.9" rx="0"/><rect x="258" y="37.5" width="4" height="5" fill="none" stroke="#777" stroke-width="0.8"/><line x1="252.0" y1="33.5" x2="255.0" y2="36.5" stroke="#888" stroke-width="1" opacity="1"/><line x1="255.0" y1="33.5" x2="252.0" y2="36.5" stroke="#888" stroke-width="1" opacity="1"/></g><g transform="translate(270,38.5) scale(0.84) translate(-270,-38.5)"><rect x="265.0" y="34.5" width="7" height="9" fill="#3a50b0" opacity="1" rx="0"/><rect x="268.0" y="36.5" width="7.5" height="7.5" fill="#f0e060" opacity="1" rx="0"/><rect x="268" y="36.5" width="7.5" height="7.5" fill="none" stroke="#333" stroke-width="0.9"/><rect x="267.0" y="33.3" width="4" height="2.2" fill="#777" opacity="1" rx="0"/></g><g transform="translate(284,38.5) scale(0.84) translate(-284,-38.5)"><circle cx="284.0" cy="38.5" r="5" fill="#8c8480" opacity="1" stroke="#5a5450" stroke-width="1"/><circle cx="284.0" cy="38.5" r="3" fill="#b89890" opacity="0.9"/></g><g transform="translate(298,38.5) scale(0.84) translate(-298,-38.5)"><rect x="293.0" y="34.5" width="10" height="8" fill="none" opacity="1" rx="0"/><rect x="293.5" y="35.0" width="9" height="7.5" fill="#f4e8c0" stroke="#c02020" stroke-width="1.4"/><line x1="298.0" y1="34.5" x2="298.0" y2="42.5" stroke="#2030b0" stroke-width="1.3" opacity="1"/><rect x="299.5" y="33.0" width="4" height="3.5" fill="#3048c8" opacity="1" rx="0"/></g><g transform="translate(311,38.5) scale(0.84) translate(-311,-38.5)"><rect x="306.5" y="35.0" width="9" height="7.5" fill="#f4e8c0" stroke="#c02020" stroke-width="1.4"/><line x1="306.5" y1="38.5" x2="315.5" y2="38.5" stroke="#c02020" stroke-width="1.2" opacity="1"/><rect x="309.0" y="33.3" width="4" height="2.5" fill="#2a2a90" opacity="1" rx="0"/></g><g transform="translate(326,38.5) scale(0.84) translate(-326,-38.5)"><rect x="321.0" y="37.5" width="10" height="4.5" fill="#444" opacity="1" rx="0"/><rect x="323.0" y="34.0" width="6" height="4" fill="#e8e8e8" opacity="1" rx="0"/><rect x="322.5" y="41.0" width="7" height="2.5" fill="#bbb" opacity="1" rx="0"/><rect x="321" y="37.5" width="10" height="4.5" fill="none" stroke="#111" stroke-width="0.8"/></g><g transform="translate(340,38.5) scale(0.84) translate(-340,-38.5)"><rect x="335.0" y="37.5" width="10" height="4.5" fill="#555" opacity="1" rx="0"/><rect x="337.0" y="34.0" width="6" height="4" fill="#f4f4f4" opacity="1" rx="0"/><rect x="336.5" y="40.5" width="7" height="3.5" fill="#ddd" opacity="1" rx="0"/><rect x="341.0" y="34.5" width="4" height="8" fill="#fff" opacity="0.9" rx="0"/><rect x="341" y="34.5" width="4" height="8" fill="none" stroke="#222" stroke-width="0.8"/></g><g transform="translate(354,38.5) scale(0.84) translate(-354,-38.5)"><polygon points="349.0,34.5 354.0,36.0 359.0,34.5 359.0,42.5 354.0,43.5 349.0,42.5" fill="#f2f0e0" stroke="#222" stroke-width="1" opacity="1"/><rect x="352.0" y="37.0" width="5" height="4.5" fill="#c8c090" opacity="1" rx="0"/><circle cx="356.0" cy="40.5" r="2.2" fill="#fff" opacity="1" stroke="#222" stroke-width="0.9"/></g><g transform="translate(368,38.5) scale(0.84) translate(-368,-38.5)"><rect x="363.0" y="36.0" width="6.5" height="7.5" fill="#fff" opacity="1" rx="0"/><rect x="363" y="36.0" width="6.5" height="7.5" fill="#e8e8e8" stroke="#222" stroke-width="1"/><rect x="366.5" y="33.5" width="6.5" height="8" fill="#fff" stroke="#222" stroke-width="1"/><rect x="368.0" y="35.5" width="3.5" height="4" fill="#c8c4a0" opacity="1" rx="0"/></g><g transform="translate(381,38.5) scale(0.84) translate(-381,-38.5)"><polygon points="377.0,33.5 383.0,33.5 385.5,36.0 385.5,43.5 377.0,43.5" fill="#fff" stroke="#222" stroke-width="1" opacity="1"/><line x1="379.0" y1="36.5" x2="383.0" y2="40.5" stroke="#c8a020" stroke-width="1.6" opacity="1"/><rect x="378.5" y="40.5" width="3" height="2" fill="#888" opacity="1" rx="0"/></g><polygon points="388.5,38.5 393.5,38.5 391,41.3" fill="#000"/><g transform="translate(414,38.5) scale(0.84) translate(-414,-38.5)"><polygon points="410.0,38.5 413.0,34.0 416.0,38.5 414.5,38.5 414.5,41.5 411.5,41.5 411.5,38.5" fill="#2038c0" stroke="#101870" stroke-width="0.7" opacity="1"/><circle cx="416.0" cy="41.0" r="3" fill="#fff" opacity="0.9" stroke="#d02020" stroke-width="1.3"/></g><g transform="translate(427,38.5) scale(0.84) translate(-427,-38.5)"><rect x="422.5" y="35.5" width="7" height="6" fill="#f0d8d0" opacity="1" rx="0"/><rect x="422.5" y="35.5" width="7" height="6" fill="none" stroke="#b02020" stroke-width="1.3"/><circle cx="429.0" cy="40.5" r="2.5" fill="#40d0d0" opacity="1" stroke="#111" stroke-width="1"/><line x1="430.8" y1="42.3" x2="432.5" y2="44.0" stroke="#111" stroke-width="1.4" opacity="1"/><rect x="423.0" y="33.5" width="6" height="2" fill="#b02020" opacity="0.8" rx="0"/></g><g transform="translate(441,38.5) scale(0.84) translate(-441,-38.5)"><rect x="436.5" y="36.5" width="1" height="1" fill="#555" opacity="1" rx="0"/><rect x="436.5" y="39.0" width="1" height="1" fill="#555" opacity="1" rx="0"/><rect x="436.5" y="41.5" width="1" height="1" fill="#555" opacity="1" rx="0"/><rect x="439.0" y="36.5" width="1" height="1" fill="#555" opacity="1" rx="0"/><rect x="439.0" y="39.0" width="1" height="1" fill="#555" opacity="1" rx="0"/><rect x="439.0" y="41.5" width="1" height="1" fill="#555" opacity="1" rx="0"/><rect x="441.5" y="36.5" width="1" height="1" fill="#555" opacity="1" rx="0"/><rect x="441.5" y="39.0" width="1" height="1" fill="#555" opacity="1" rx="0"/><rect x="441.5" y="41.5" width="1" height="1" fill="#555" opacity="1" rx="0"/><rect x="442" y="33.5" width="4.5" height="4.5" fill="#fff" stroke="#2030b0" stroke-width="1.3"/></g><g transform="translate(455,38.5) scale(0.84) translate(-455,-38.5)"><rect x="451.0" y="34.0" width="2" height="9.5" fill="#b02020" opacity="1" rx="0"/><line x1="450.0" y1="34.0" x2="455.0" y2="34.0" stroke="#333" stroke-width="1" opacity="1"/><line x1="450.0" y1="43.5" x2="455.0" y2="43.5" stroke="#333" stroke-width="1" opacity="1"/><rect x="453.0" y="34.5" width="2" height="8.5" fill="#e8e0d0" opacity="1" rx="0"/><text x="456" y="40.5" font-size="8" font-weight="bold" fill="#c03020" font-family="Liberation Sans, sans-serif">?</text></g><polygon points="461.5,38.5 466.5,38.5 464,41.3" fill="#000"/><g transform="translate(729.5,39) scale(0.84) translate(-729.5,-39)"><rect x="725.0" y="35" width="9" height="8.5" fill="#f4f4e0" stroke="#d8d020" stroke-width="1.8"/><rect x="724.5" y="34.5" width="10" height="2.5" fill="#d8d020" opacity="1" rx="0"/><line x1="724.5" y1="44.0" x2="734.5" y2="44.0" stroke="#444" stroke-width="0.8" opacity="1"/><line x1="734.5" y1="35.0" x2="734.5" y2="44.0" stroke="#444" stroke-width="0.8" opacity="1"/></g><g transform="translate(742.5,39) scale(0.84) translate(-742.5,-39)"><rect x="738.0" y="35" width="9" height="8.5" fill="#f4f4e0" stroke="#d8d020" stroke-width="1.8"/><rect x="737.5" y="34.5" width="10" height="2.5" fill="#d8d020" opacity="1" rx="0"/><line x1="737.5" y1="44.0" x2="747.5" y2="44.0" stroke="#444" stroke-width="0.8" opacity="1"/><line x1="747.5" y1="35.0" x2="747.5" y2="44.0" stroke="#444" stroke-width="0.8" opacity="1"/><rect x="741.5" y="38.0" width="5" height="5" fill="#555" opacity="1" rx="0"/><rect x="742.5" y="39.0" width="3" height="3" fill="#eee" opacity="1" rx="0"/></g><g transform="translate(755,39) scale(0.84) translate(-755,-39)"><rect x="750.5" y="35" width="9" height="8.5" fill="#dcd8d0" stroke="#8c8880" stroke-width="1.4"/><rect x="750.0" y="34.5" width="10" height="2" fill="#8c8880" opacity="1" rx="0"/><rect x="754.0" y="38.0" width="5" height="4.5" fill="#9c988c" opacity="1" rx="0"/></g><g transform="translate(767,39) scale(0.84) translate(-767,-39)"><rect x="762.5" y="35" width="9" height="8.5" fill="#dcd8d0" stroke="#8c8880" stroke-width="1.4"/><rect x="762.0" y="34.5" width="10" height="2" fill="#8c8880" opacity="1" rx="0"/><line x1="764.0" y1="39.5" x2="770.0" y2="39.5" stroke="#8c8880" stroke-width="1" opacity="1"/></g><g transform="translate(779,39) scale(0.84) translate(-779,-39)"><rect x="774.5" y="35" width="9" height="8.5" fill="#dcd8d0" stroke="#8c8880" stroke-width="1.4"/><rect x="774.0" y="34.5" width="10" height="2" fill="#8c8880" opacity="1" rx="0"/><line x1="776.0" y1="39.5" x2="782.0" y2="39.5" stroke="#8c8880" stroke-width="1" opacity="1"/></g><g transform="translate(792,39) scale(0.84) translate(-792,-39)"><rect x="787.5" y="35" width="9" height="8.5" fill="#f4f4e0" stroke="#d8d020" stroke-width="1.8"/><rect x="787.0" y="34.5" width="10" height="2.5" fill="#d8d020" opacity="1" rx="0"/><line x1="787.0" y1="44.0" x2="797.0" y2="44.0" stroke="#444" stroke-width="0.8" opacity="1"/><line x1="797.0" y1="35.0" x2="797.0" y2="44.0" stroke="#444" stroke-width="0.8" opacity="1"/><rect x="791.0" y="38.0" width="5" height="4.5" fill="#2838b0" opacity="1" rx="0"/><rect x="790.0" y="37.0" width="1.5" height="1.5" fill="#c03030" opacity="1" rx="0"/></g><g transform="translate(805,39) scale(0.84) translate(-805,-39)"><rect x="800.5" y="35" width="9" height="8.5" fill="#f4f4e0" stroke="#d8d020" stroke-width="1.8"/><rect x="800.0" y="34.5" width="10" height="2.5" fill="#d8d020" opacity="1" rx="0"/><line x1="800.0" y1="44.0" x2="810.0" y2="44.0" stroke="#444" stroke-width="0.8" opacity="1"/><line x1="810.0" y1="35.0" x2="810.0" y2="44.0" stroke="#444" stroke-width="0.8" opacity="1"/><rect x="804.0" y="38.0" width="5" height="4.5" fill="#2838b0" opacity="1" rx="0"/><line x1="804.0" y1="38.0" x2="809.0" y2="43.0" stroke="#c03030" stroke-width="1.2" opacity="1"/></g><g transform="translate(818,39) scale(0.84) translate(-818,-39)"><rect x="813.5" y="35" width="9" height="8.5" fill="#dcd8d0" stroke="#8c8880" stroke-width="1.4"/><rect x="813.0" y="34.5" width="10" height="2" fill="#8c8880" opacity="1" rx="0"/><rect x="817.0" y="38.0" width="5" height="4.5" fill="#9c988c" opacity="1" rx="0"/></g><g transform="translate(831,39) scale(0.84) translate(-831,-39)"><rect x="826.5" y="35" width="9" height="8.5" fill="#dcd8d0" stroke="#8c8880" stroke-width="1.4"/><rect x="826.0" y="34.5" width="10" height="2" fill="#8c8880" opacity="1" rx="0"/><rect x="829.0" y="38.0" width="5" height="5" fill="#77746c" opacity="1" rx="0"/><rect x="830.5" y="39.0" width="2.5" height="3" fill="#ccc" opacity="1" rx="0"/></g><g transform="translate(844,39) scale(0.84) translate(-844,-39)"><rect x="839.5" y="35" width="9" height="8.5" fill="#dcd8d0" stroke="#8c8880" stroke-width="1.4"/><rect x="839.0" y="34.5" width="10" height="2" fill="#8c8880" opacity="1" rx="0"/><rect x="842.0" y="38.0" width="5" height="5" fill="#77746c" opacity="1" rx="0"/><rect x="843.5" y="39.0" width="2.5" height="3" fill="#ccc" opacity="1" rx="0"/></g><g transform="translate(857,39) scale(0.84) translate(-857,-39)"><rect x="852.5" y="35" width="9" height="8.5" fill="#f4f4e0" stroke="#d8d020" stroke-width="1.8"/><rect x="852.0" y="34.5" width="10" height="2.5" fill="#d8d020" opacity="1" rx="0"/><line x1="852.0" y1="44.0" x2="862.0" y2="44.0" stroke="#444" stroke-width="0.8" opacity="1"/><line x1="862.0" y1="35.0" x2="862.0" y2="44.0" stroke="#444" stroke-width="0.8" opacity="1"/><line x1="854.0" y1="39.0" x2="860.0" y2="39.0" stroke="#888" stroke-width="1" opacity="1"/></g><g transform="translate(870,39) scale(0.84) translate(-870,-39)"><rect x="865.5" y="35" width="9" height="8.5" fill="#f4f4e0" stroke="#d8d020" stroke-width="1.8"/><rect x="865.0" y="34.5" width="10" height="2.5" fill="#d8d020" opacity="1" rx="0"/><line x1="865.0" y1="44.0" x2="875.0" y2="44.0" stroke="#444" stroke-width="0.8" opacity="1"/><line x1="875.0" y1="35.0" x2="875.0" y2="44.0" stroke="#444" stroke-width="0.8" opacity="1"/><line x1="867.0" y1="39.0" x2="873.0" y2="39.0" stroke="#888" stroke-width="1" opacity="1"/></g><polygon points="881.5,39 886.5,39 884,41.8" fill="#000"/><g transform="translate(12.5,55) scale(0.84) translate(-12.5,-55)"><rect x="8.0" y="52.5" width="2.8" height="7.5" fill="#e8e8e8" stroke="#505050" stroke-width="0.8"/><rect x="14.0" y="52.5" width="2.8" height="7.5" fill="#d2d21c" stroke="#505050" stroke-width="0.8"/><path d="M9.5,52.5 Q12.5,48.5 15.5,52.5" fill="none" stroke="#505050" stroke-width="0.8"/></g><g transform="translate(25,55) scale(0.84) translate(-25,-55)"><rect x="20.5" y="50.5" width="3" height="3.5" fill="#d2d21c" stroke="#505050" stroke-width="0.8"/><rect x="26" y="54.5" width="3" height="4.5" fill="#d2d21c" stroke="#505050" stroke-width="0.8"/><line x1="23.5" y1="52.0" x2="27.5" y2="52.0" stroke="#505050" stroke-width="0.8" opacity="1"/><line x1="27.5" y1="52.0" x2="27.5" y2="54.5" stroke="#505050" stroke-width="0.8" opacity="1"/></g><g transform="translate(39,55) scale(0.84) translate(-39,-55)"><rect x="34" y="51" width="2.8" height="3.5" fill="#d2d21c" stroke="#505050" stroke-width="0.8"/><rect x="37.5" y="54.5" width="2.8" height="4.5" fill="#d2d21c" stroke="#505050" stroke-width="0.8"/><rect x="41.2" y="52.5" width="2.8" height="4.5" fill="#d2d21c" stroke="#505050" stroke-width="0.8"/><line x1="39.0" y1="49.5" x2="39.0" y2="53.0" stroke="#3040c0" stroke-width="1.2" opacity="1"/></g><g transform="translate(52.5,55) scale(0.84) translate(-52.5,-55)"><rect x="48.0" y="52.5" width="2.8" height="7.5" fill="#e8e8e8" stroke="#505050" stroke-width="0.8"/><rect x="52.0" y="55" width="5.5" height="3.5" fill="#d2d21c" stroke="#505050" stroke-width="0.8"/><line x1="52.5" y1="52.0" x2="56.5" y2="52.0" stroke="#333" stroke-width="0.9" opacity="1"/><polygon points="55.5,50.5 58.0,52.0 55.5,53.5" fill="#333" stroke="none" stroke-width="1" opacity="1"/></g><g transform="translate(66,55) scale(0.84) translate(-66,-55)"><rect x="61.5" y="52.5" width="2.8" height="7.5" fill="#e8e8e8" stroke="#505050" stroke-width="0.8"/><rect x="67" y="55.5" width="3.5" height="4" fill="#d2d21c" stroke="#505050" stroke-width="0.8"/><line x1="65.0" y1="51.0" x2="70.0" y2="51.0" stroke="#505050" stroke-width="0.8" opacity="1"/><line x1="68.5" y1="51.0" x2="68.5" y2="55.0" stroke="#505050" stroke-width="0.8" opacity="1"/></g><g transform="translate(79.5,55) scale(0.84) translate(-79.5,-55)"><rect x="75.5" y="52.5" width="2.8" height="7.5" fill="#e8e8e8" stroke="#505050" stroke-width="0.8"/><rect x="81.0" y="50.5" width="3" height="9.5" fill="#d2d21c" stroke="#505050" stroke-width="0.8"/><circle cx="76.9" cy="51.0" r="1.2" fill="#3040c0" opacity="1"/></g><g transform="translate(92.5,55) scale(0.84) translate(-92.5,-55)"><rect x="88.0" y="51.5" width="2.8" height="8.5" fill="#e8e8e8" stroke="#505050" stroke-width="0.8"/><rect x="94.5" y="51.5" width="2.8" height="8.5" fill="#d2d21c" stroke="#505050" stroke-width="0.8"/><line x1="92.5" y1="50.0" x2="92.5" y2="60.5" stroke="#8030a0" stroke-width="1.3" opacity="1"/><line x1="87.5" y1="50.5" x2="97.5" y2="50.5" stroke="#505050" stroke-width="0.8" opacity="1"/></g><g transform="translate(106,55) scale(0.84) translate(-106,-55)"><rect x="101.5" y="50.0" width="2.4" height="10" fill="#d8c828" opacity="1" rx="0"/><line x1="105.0" y1="52.0" x2="110.0" y2="59.0" stroke="#3040b0" stroke-width="1.3" opacity="1"/><line x1="110.0" y1="52.0" x2="105.0" y2="59.0" stroke="#3040b0" stroke-width="1.3" opacity="1"/><circle cx="105.5" cy="59.0" r="1.4" fill="none" opacity="1" stroke="#3040b0" stroke-width="1"/><circle cx="109.5" cy="59.0" r="1.4" fill="none" opacity="1" stroke="#3040b0" stroke-width="1"/></g><g transform="translate(119.5,55) scale(0.84) translate(-119.5,-55)"><rect x="115.5" y="51.0" width="2.4" height="9" fill="#d8c828" opacity="1" rx="0"/><rect x="121.5" y="51.0" width="2.4" height="9" fill="#d8c828" opacity="1" rx="0"/><line x1="119.5" y1="50.0" x2="119.5" y2="60.0" stroke="#3040b0" stroke-width="1" opacity="1"/><polygon points="119.5,49.5 118.0,52.0 121.0,52.0" fill="#3040b0" stroke="none" stroke-width="1" opacity="1"/></g><g transform="translate(132.5,55) scale(0.84) translate(-132.5,-55)"><rect x="128.0" y="52.5" width="2.8" height="7.5" fill="#e8e8e8" stroke="#505050" stroke-width="0.8"/><rect x="133.5" y="55.5" width="3.5" height="4" fill="#d2d21c" stroke="#505050" stroke-width="0.8"/><line x1="131.5" y1="51.0" x2="136.5" y2="51.0" stroke="#505050" stroke-width="0.8" opacity="1"/><line x1="135.0" y1="51.0" x2="135.0" y2="55.0" stroke="#505050" stroke-width="0.8" opacity="1"/></g><g transform="translate(146,55) scale(0.84) translate(-146,-55)"><rect x="141.5" y="50.0" width="2.4" height="10" fill="#d8c828" opacity="1" rx="0"/><line x1="145.0" y1="52.0" x2="150.0" y2="59.0" stroke="#3040b0" stroke-width="1.3" opacity="1"/><line x1="150.0" y1="52.0" x2="145.0" y2="59.0" stroke="#3040b0" stroke-width="1.3" opacity="1"/><circle cx="145.5" cy="59.0" r="1.4" fill="none" opacity="1" stroke="#3040b0" stroke-width="1"/><circle cx="149.5" cy="59.0" r="1.4" fill="none" opacity="1" stroke="#3040b0" stroke-width="1"/></g><g transform="translate(158,55) scale(0.84) translate(-158,-55)"><rect x="154.0" y="51.0" width="2.4" height="9" fill="#d8c828" opacity="1" rx="0"/><rect x="160.0" y="51.0" width="2.4" height="9" fill="#d8c828" opacity="1" rx="0"/><line x1="158.0" y1="50.0" x2="158.0" y2="60.0" stroke="#3040b0" stroke-width="1" opacity="1"/><polygon points="158.0,49.5 156.5,52.0 159.5,52.0" fill="#3040b0" stroke="none" stroke-width="1" opacity="1"/></g><g transform="translate(171,55) scale(0.84) translate(-171,-55)"><line x1="166.0" y1="55.0" x2="176.0" y2="55.0" stroke="#d0b818" stroke-width="1.6" opacity="1"/><line x1="167.5" y1="51.5" x2="174.5" y2="58.5" stroke="#d0b818" stroke-width="1.6" opacity="1"/><line x1="171.0" y1="50.0" x2="171.0" y2="60.0" stroke="#d0b818" stroke-width="1.6" opacity="1"/><line x1="174.5" y1="51.5" x2="167.5" y2="58.5" stroke="#d0b818" stroke-width="1.6" opacity="1"/><circle cx="171.0" cy="55.0" r="1.8" fill="#3040c0" opacity="1"/></g><g transform="translate(185,55) scale(0.84) translate(-185,-55)"><rect x="180.0" y="53.5" width="10" height="3.5" fill="#e0d030" opacity="1" rx="0"/><rect x="180" y="53.5" width="10" height="3.5" fill="none" stroke="#2030a0" stroke-width="1.2"/><line x1="180.0" y1="59.0" x2="190.0" y2="59.0" stroke="#2030a0" stroke-width="1" opacity="1"/></g><g transform="translate(204,55) scale(0.84) translate(-204,-55)"><rect x="202" y="50.5" width="6.5" height="5" fill="#e8e4ff" stroke="#3040b0" stroke-width="1.1"/><line x1="199.0" y1="56.0" x2="204.0" y2="56.0" stroke="#c83030" stroke-width="1.2" opacity="1"/><line x1="201.0" y1="53.0" x2="201.0" y2="60.0" stroke="#c83030" stroke-width="1.2" opacity="1"/><line x1="199.0" y1="60.0" x2="205.0" y2="60.0" stroke="#c83030" stroke-width="1" opacity="1"/></g><g transform="translate(217,55) scale(0.84) translate(-217,-55)"><rect x="217" y="50" width="5" height="4" fill="#e8e4ff" stroke="#3040b0" stroke-width="1.1"/><path d="M212,60 Q216,51 221,60" fill="none" stroke="#c83030" stroke-width="1.2"/></g><g transform="translate(229.5,55) scale(0.84) translate(-229.5,-55)"><polygon points="224.5,56.0 227.5,53.0 233.5,53.0 231.5,58.0 226.5,58.0" fill="#e8d030" stroke="#c83030" stroke-width="1.1" opacity="1"/><line x1="224.0" y1="55.5" x2="228.5" y2="55.5" stroke="#c83030" stroke-width="1.3" opacity="1"/></g><g transform="translate(247.5,55) scale(0.84) translate(-247.5,-55)"><rect x="242.5" y="53.0" width="4.5" height="4" fill="#d8c020" opacity="1" rx="0"/><rect x="248.0" y="53.0" width="4.5" height="4" fill="#d8c020" opacity="1" rx="0"/><rect x="242.5" y="53" width="4.5" height="4" fill="none" stroke="#554" stroke-width="0.8"/><rect x="248.0" y="53" width="4.5" height="4" fill="none" stroke="#554" stroke-width="0.8"/><circle cx="247.5" cy="55.0" r="1" fill="#c03030" opacity="1"/></g><g transform="translate(261,55) scale(0.84) translate(-261,-55)"><rect x="256.0" y="53.0" width="4.5" height="4" fill="#d8c020" opacity="1" rx="0"/><rect x="261.5" y="53.0" width="4.5" height="4" fill="#d8c020" opacity="1" rx="0"/><rect x="256" y="53" width="4.5" height="4" fill="none" stroke="#554" stroke-width="0.8"/><rect x="261.5" y="53" width="4.5" height="4" fill="none" stroke="#554" stroke-width="0.8"/><circle cx="261.0" cy="55.0" r="1" fill="#c03030" opacity="1"/></g><g transform="translate(279.5,55) scale(0.84) translate(-279.5,-55)"><circle cx="277.0" cy="52.0" r="1.8" fill="#333" opacity="1"/><circle cx="282.0" cy="52.0" r="1.8" fill="#333" opacity="1"/><polygon points="274.5,59.0 277.0,54.0 279.5,59.0" fill="#e0d020" stroke="none" stroke-width="1" opacity="1"/><polygon points="279.5,59.0 282.0,54.0 284.5,59.0" fill="#3048c0" stroke="none" stroke-width="1" opacity="1"/><rect x="274.5" y="58.0" width="10" height="2" fill="#e0d020" opacity="0.9" rx="0"/></g><g transform="translate(293,55) scale(0.84) translate(-293,-55)"><circle cx="290.5" cy="52.0" r="1.8" fill="#333" opacity="1"/><circle cx="295.5" cy="52.0" r="1.8" fill="#333" opacity="1"/><polygon points="288.0,59.0 290.5,54.0 293.0,59.0" fill="#3048c0" stroke="none" stroke-width="1" opacity="1"/><polygon points="293.0,59.0 295.5,54.0 298.0,59.0" fill="#e0d020" stroke="none" stroke-width="1" opacity="1"/><rect x="288.0" y="58.0" width="10" height="2" fill="#3048c0" opacity="0.9" rx="0"/><rect x="292.0" y="50.0" width="6" height="3" fill="#fff" opacity="0.9" rx="0"/></g><g transform="translate(306,55) scale(0.84) translate(-306,-55)"><rect x="301.5" y="51.0" width="3" height="8" fill="#aaa69c" opacity="1" rx="0"/><rect x="306.5" y="53.0" width="3.5" height="7" fill="#b8b4aa" opacity="1" rx="0"/><line x1="301.0" y1="50.5" x2="306.0" y2="50.5" stroke="#9a968c" stroke-width="1" opacity="1"/></g><g transform="translate(319.5,55) scale(0.84) translate(-319.5,-55)"><rect x="315.0" y="51.0" width="3" height="8" fill="#aaa69c" opacity="1" rx="0"/><rect x="320.0" y="53.0" width="3.5" height="7" fill="#b8b4aa" opacity="1" rx="0"/><line x1="314.5" y1="50.5" x2="319.5" y2="50.5" stroke="#9a968c" stroke-width="1" opacity="1"/></g><g transform="translate(332.5,55) scale(0.84) translate(-332.5,-55)"><rect x="327.5" y="51.0" width="3.5" height="4" fill="#222" opacity="1" rx="0"/><rect x="330.5" y="54.0" width="6" height="5.5" fill="#d8c820" opacity="1" rx="0"/><rect x="330.5" y="54" width="6" height="5.5" fill="none" stroke="#443" stroke-width="0.8"/><circle cx="334.5" cy="52.5" r="1.6" fill="#333" opacity="1"/></g><g transform="translate(346,55) scale(0.84) translate(-346,-55)"><polygon points="341.0,59.0 345.0,53.0 349.0,59.0" fill="#d8c820" stroke="#443" stroke-width="0.8" opacity="1"/><circle cx="348.0" cy="53.0" r="1.8" fill="#2a3aa0" opacity="1"/><rect x="342.0" y="58.0" width="8" height="2" fill="#554" opacity="1" rx="0"/></g><polygon points="355.0,55 360.0,55 357.5,57.8" fill="#000"/><g transform="translate(607.5,55) scale(0.84) translate(-607.5,-55)"><rect x="602.5" y="54.0" width="10" height="2.2" fill="#a01010" opacity="1" rx="0"/></g><g transform="translate(620,55) scale(0.84) translate(-620,-55)"><line x1="615.0" y1="56.0" x2="625.0" y2="56.0" stroke="#a01010" stroke-width="1.2" opacity="1"/><line x1="617.0" y1="53.0" x2="617.0" y2="56.0" stroke="#a01010" stroke-width="1" opacity="1"/><line x1="622.0" y1="53.0" x2="622.0" y2="56.0" stroke="#a01010" stroke-width="1" opacity="1"/><line x1="616.0" y1="53.0" x2="618.5" y2="53.0" stroke="#a01010" stroke-width="1" opacity="1"/><line x1="621.0" y1="53.0" x2="623.5" y2="53.0" stroke="#a01010" stroke-width="1" opacity="1"/></g><g transform="translate(634,55) scale(0.84) translate(-634,-55)"><line x1="630.0" y1="50.0" x2="630.0" y2="60.0" stroke="#a01010" stroke-width="1.3" opacity="1"/><line x1="638.0" y1="50.0" x2="638.0" y2="60.0" stroke="#a01010" stroke-width="1.3" opacity="1"/><line x1="630.0" y1="57.0" x2="638.0" y2="57.0" stroke="#a01010" stroke-width="1.3" opacity="1"/><line x1="630.0" y1="53.0" x2="638.0" y2="53.0" stroke="#a01010" stroke-width="0.8" opacity="1"/></g><g transform="translate(647,55) scale(0.84) translate(-647,-55)"><circle cx="647.0" cy="55.0" r="4.3" fill="none" opacity="1" stroke="#a01010" stroke-width="1.5"/></g><g transform="translate(660,55) scale(0.84) translate(-660,-55)"><line x1="655.0" y1="59.5" x2="665.0" y2="59.5" stroke="#a01010" stroke-width="1.4" opacity="1"/><line x1="655.0" y1="59.5" x2="663.0" y2="51.0" stroke="#a01010" stroke-width="1.4" opacity="1"/><line x1="658.0" y1="56.0" x2="662.0" y2="56.0" stroke="#a01010" stroke-width="1" opacity="1"/></g><g transform="translate(674,55) scale(0.84) translate(-674,-55)"><rect x="669.0" y="50.0" width="3" height="10" fill="#c8a8a0" opacity="1" rx="0"/><rect x="676.0" y="50.0" width="3" height="10" fill="#c8a8a0" opacity="1" rx="0"/><line x1="669.0" y1="50.0" x2="669.0" y2="60.0" stroke="#b02020" stroke-width="1" opacity="1"/><line x1="679.0" y1="50.0" x2="679.0" y2="60.0" stroke="#b02020" stroke-width="1" opacity="1"/><rect x="672.5" y="52.0" width="3" height="2.5" fill="#b02020" opacity="1" rx="0"/><rect x="672.5" y="56.0" width="3" height="2.5" fill="#b02020" opacity="1" rx="0"/><line x1="672.0" y1="50.0" x2="676.0" y2="50.0" stroke="#b02020" stroke-width="0.8" opacity="1"/></g><g transform="translate(702.5,55) scale(0.84) translate(-702.5,-55)"><rect x="697.5" y="53" width="6.5" height="6.5" fill="#e0e4ff" stroke="#1a2a90" stroke-width="1.3"/><rect x="700.5" y="50.5" width="6.5" height="6.5" fill="#c8d0ff" stroke="#1a2a90" stroke-width="1.3"/></g><g transform="translate(716,55) scale(0.84) translate(-716,-55)"><rect x="712" y="53" width="6.5" height="6.5" fill="#e0e4ff" stroke="#1a2a90" stroke-width="1.3"/><rect x="714" y="50.5" width="6.5" height="6.5" fill="#c8d0ff" stroke="#1a2a90" stroke-width="1.3"/><rect x="712.5" y="54.5" width="4" height="4" fill="#2a3cb8" opacity="0.9" rx="0"/></g><g transform="translate(729,55) scale(0.84) translate(-729,-55)"><rect x="724" y="53" width="6.5" height="6.5" fill="#e0e4ff" stroke="#1a2a90" stroke-width="1.3"/><rect x="727" y="50.5" width="6.5" height="6.5" fill="#2a3cb8" stroke="#1a2a90" stroke-width="1.3"/></g><g transform="translate(742.5,55) scale(0.84) translate(-742.5,-55)"><rect x="738.5" y="53" width="6.5" height="6.5" fill="#e0e4ff" stroke="#1a2a90" stroke-width="1.3"/><rect x="740.5" y="50.5" width="6.5" height="6.5" fill="#2a3cb8" stroke="#1a2a90" stroke-width="1.3"/><rect x="739.0" y="54.5" width="4" height="4" fill="#2a3cb8" opacity="0.9" rx="0"/></g><g transform="translate(760,55) scale(0.84) translate(-760,-55)"><ellipse cx="760" cy="55" rx="5" ry="2.8" fill="#d05050" stroke="#802020" stroke-width="0.9"/><line x1="756.0" y1="55.0" x2="764.0" y2="55.0" stroke="#802020" stroke-width="0.9" opacity="1"/></g><g transform="translate(774,55) scale(0.84) translate(-774,-55)"><line x1="769.0" y1="52.0" x2="779.0" y2="58.0" stroke="#e0c818" stroke-width="2.2" opacity="1"/><line x1="769.0" y1="58.0" x2="779.0" y2="52.0" stroke="#c83030" stroke-width="1.6" opacity="1"/><circle cx="777.0" cy="58.0" r="1.8" fill="#c83030" opacity="1"/></g><g transform="translate(792.5,55) scale(0.84) translate(-792.5,-55)"><polygon points="788.0,52.0 796.5,52.0 796.5,59.0 788.0,59.0" fill="#f0e450" stroke="#443" stroke-width="1" opacity="1"/><line x1="792.5" y1="50.0" x2="796.5" y2="52.0" stroke="#c03030" stroke-width="1.5" opacity="1"/><rect x="793.5" y="50.0" width="3" height="2" fill="#c03030" opacity="1" rx="0"/></g><g transform="translate(859,55) scale(0.84) translate(-859,-55)"><polygon points="855.0,51.0 863.0,55.0 855.0,59.0" fill="#c02020" stroke="none" stroke-width="1" opacity="1"/><polygon points="855.0,57.0 860.0,59.5 855.0,60.0" fill="#2040c0" stroke="none" stroke-width="1" opacity="1"/><line x1="855.0" y1="51.0" x2="863.0" y2="51.0" stroke="#2040c0" stroke-width="1.2" opacity="1"/></g><g transform="translate(910,55) scale(0.84) translate(-910,-55)"><polygon points="905.0,59.0 910.0,51.0 915.0,59.0" fill="none" stroke="#9a968c" stroke-width="1.2" opacity="1"/><line x1="907.0" y1="57.0" x2="913.0" y2="57.0" stroke="#9a968c" stroke-width="1" opacity="1"/></g><g transform="translate(924,55) scale(0.84) translate(-924,-55)"><rect x="924.0" y="51.0" width="4" height="8.5" fill="none" opacity="1" rx="0"/><rect x="924.5" y="51" width="3.5" height="9" fill="#c8d0ff" stroke="#2030a0" stroke-width="1.1"/><rect x="919.0" y="56.0" width="1.2" height="4" fill="#2030a0" opacity="1" rx="0"/><rect x="921.0" y="54.0" width="1.2" height="6" fill="#2030a0" opacity="1" rx="0"/><rect x="925.5" y="49.5" width="2" height="2" fill="#2030a0" opacity="1" rx="0"/></g><g transform="translate(954,55) scale(0.84) translate(-954,-55)"><rect x="949.0" y="50.0" width="2" height="10" fill="#2040c0" opacity="1" rx="0"/><polygon points="952.0,52.0 959.0,55.0 952.0,58.0" fill="#c02020" stroke="none" stroke-width="1" opacity="1"/><rect x="951.0" y="50.0" width="4" height="2" fill="#2040c0" opacity="1" rx="0"/></g><polygon points="682.5,55 687.5,55 685,57.8" fill="#000"/><polygon points="801.5,55 806.5,55 804,57.8" fill="#000"/><polygon points="932.5,55 937.5,55 935,57.8" fill="#000"/><polygon points="843,54 847,54 845,51.5" fill="#000"/><polygon points="843,56.5 847,56.5 845,59" fill="#000"/><polygon points="894,54 898,54 896,51.5" fill="#000"/><polygon points="894,56.5 898,56.5 896,59" fill="#000"/><g stroke="#fff" stroke-width="1.4" fill="none"><path d="M148.3,67.2 l4.6,4.6 M152.9,67.2 l-4.6,4.6"/></g><g stroke="#fff" stroke-width="1" fill="none"><rect x="138" y="66.3" width="3" height="3.6" fill="none"/><path d="M136.8,70.2 h5.4 M139.5,70.2 v3"/></g><polygon points="15.5,642.8 15.5,648.2 12.5,645.5" fill="#000"/><polygon points="145.5,642.8 145.5,648.2 148.5,645.5" fill="#000"/><rect x="9" y="677" width="4" height="3" fill="#c03030"/><rect x="13" y="680" width="4" height="3" fill="#30b0c0"/><path d="M10,680 v2 h3" stroke="#222" fill="none" stroke-width="0.8"/><rect x="25.5" y="677" width="8" height="6.5" fill="#fff" stroke="#1a2a90" stroke-width="1.2"/><rect x="25.5" y="677" width="8" height="2" fill="#1a2a90"/><rect x="20.5" y="89.0" width="10" height="2" fill="#e8dc20" stroke="#3a3820" stroke-width="0.8"/><rect x="21.0" y="91.0" width="2" height="6.5" fill="#e8dc20" stroke="#3a3820" stroke-width="0.8"/><rect x="24.5" y="91.0" width="2" height="6.5" fill="#e8dc20" stroke="#3a3820" stroke-width="0.8"/><rect x="28.0" y="91.0" width="2" height="6.5" fill="#e8dc20" stroke="#3a3820" stroke-width="0.8"/><rect x="12.0" y="90.5" width="5" height="5" fill="#fff" stroke="#909090" stroke-width="0.8"/><line x1="13.0" y1="93.0" x2="16.0" y2="93.0" stroke="#000" stroke-width="0.8"/><polygon points="32.3,106.3 34.7,108.8 41.7,102.3 39.3,99.8" fill="#e8dc20" stroke="#3a3820" stroke-width="0.8"/><line x1="32.0" y1="108.6" x2="35.5" y2="108.6" stroke="#3a3820" stroke-width="0.8"/><polygon points="32.5,116.1 34.0,114.4 41.0,114.4 42.0,116.1 41.0,118.4 33.5,118.4" fill="#e8dc20" stroke="#3a3820" stroke-width="0.8"/><line x1="35.0" y1="110.1" x2="35.0" y2="113.6" stroke="#2030c0" stroke-width="1.1"/><line x1="38.5" y1="110.1" x2="38.5" y2="113.6" stroke="#2030c0" stroke-width="1.1"/><rect x="36.5" y="121.4" width="3.5" height="8.5" fill="#e8dc20" stroke="#3a3820" stroke-width="0.8"/><line x1="34.0" y1="121.4" x2="34.0" y2="129.9" stroke="#2030b0" stroke-width="1.1"/><line x1="32.5" y1="125.4" x2="35.5" y2="125.4" stroke="#2030b0" stroke-width="0.9"/><polygon points="33.5,132.2 41.0,133.0 40.5,135.2 33.5,134.7" fill="#e8dc20" stroke="#3a3820" stroke-width="0.8"/><polygon points="32.5,137.2 41.5,137.2 41.5,140.2 32.5,140.2" fill="#e8dc20" stroke="#3a3820" stroke-width="0.8"/><rect x="35.5" y="138.5" width="2.6" height="2" fill="#d02020"/><rect x="23.5" y="133.716" width="5" height="5" fill="#fff" stroke="#909090" stroke-width="0.8"/><line x1="24.5" y1="136.216" x2="27.5" y2="136.216" stroke="#000" stroke-width="0.8"/><line x1="26" y1="134.716" x2="26" y2="137.716" stroke="#000" stroke-width="0.8"/><polygon points="20.5,147.5 23.5,147.0 23.5,143.2 27.0,143.2 27.5,146.5 30.8,147.5 29.5,151.3 21.5,151.3" fill="#e8dc20" stroke="#3a3820" stroke-width="0.8"/><rect x="12.0" y="144.52" width="5" height="5" fill="#fff" stroke="#909090" stroke-width="0.8"/><line x1="13.0" y1="147.02" x2="16.0" y2="147.02" stroke="#000" stroke-width="0.8"/><polygon points="32.3,157.8 35.0,154.6 39.7,154.6 42.0,157.3 39.5,161.6 35.0,161.6" fill="#e8dc20" stroke="#b02818" stroke-width="1.2"/><polygon points="32.5,166.1 41.0,165.1 41.5,171.1 33.0,172.6" fill="#e8dc20" stroke="#5a2010" stroke-width="1.3"/><polygon points="37.0,175.2 41.1,179.4 37.0,183.6 32.9,179.4" fill="#e8dc20" stroke="#c02818" stroke-width="1.2"/><polygon points="32.5,189.2 40.5,188.7 42.0,191.2 37.5,193.2 33.5,192.2" fill="#8a8420" stroke="#3a3820" stroke-width="0.8"/><polygon points="33.5,189.7 39.5,189.2 37.5,191.2" fill="#e8dc20"/><polygon points="32.5,199.0 34.5,198.0 41.5,203.5 40.0,205.0" fill="#b8b020" stroke="#3a3820" stroke-width="0.8"/><line x1="32.0" y1="200.5" x2="37.5" y2="204.5" stroke="#3a3820" stroke-width="1"/><polygon points="32.5,210.3 34.5,207.8 42.0,207.8 40.5,210.3" fill="#e8dc20" stroke="#3a3820" stroke-width="0.8"/><rect x="32.5" y="210.3" width="8" height="2" fill="#c8c860" stroke="#3a3820" stroke-width="0.6"/><line x1="33.0" y1="214.8" x2="40.5" y2="214.8" stroke="#d02020" stroke-width="1.2"/><line x1="32.7" y1="212.3" x2="32.7" y2="216.3" stroke="#2030c0" stroke-width="1.1"/><line x1="36.5" y1="212.3" x2="36.5" y2="216.3" stroke="#888" stroke-width="0.9"/><rect x="32.5" y="219.6" width="9.5" height="3" fill="#3050c0" stroke="#182070" stroke-width="0.8"/><rect x="33.5" y="222.6" width="1.6" height="4.5" fill="#c03030"/><rect x="39.0" y="222.6" width="1.6" height="4.5" fill="#c03030"/><rect x="35.5" y="222.6" width="2.5" height="2.5" fill="#80b0e0"/><polygon points="32.5,232.5 35.5,230.5 40.5,230.5 42.0,233.5 39.5,237.5 33.5,237.5" fill="#8a7a20" stroke="#3a3820" stroke-width="0.8"/><polygon points="34.5,233.0 39.5,232.5 38.5,235.5 35.5,235.5" fill="#e8dc20"/><rect x="23.5" y="230.952" width="5" height="5" fill="#fff" stroke="#909090" stroke-width="0.8"/><line x1="24.5" y1="233.452" x2="27.5" y2="233.452" stroke="#000" stroke-width="0.8"/><line x1="26" y1="231.952" x2="26" y2="234.952" stroke="#000" stroke-width="0.8"/><polygon points="21.0,244.3 24.0,240.8 30.0,240.8 28.0,244.3" fill="#30a040" stroke="#1a5020" stroke-width="0.8"/><rect x="21.0" y="244.3" width="8" height="3.5" fill="#e8dc20" stroke="#3a3820" stroke-width="0.8"/><rect x="21.5" y="247.3" width="2" height="1.8" fill="#c03030"/><rect x="25.5" y="247.3" width="2" height="1.8" fill="#c03030"/><rect x="12.0" y="241.756" width="5" height="5" fill="#fff" stroke="#909090" stroke-width="0.8"/><line x1="13.0" y1="244.256" x2="16.0" y2="244.256" stroke="#000" stroke-width="0.8"/><polygon points="32.5,258.9 34.5,254.6 41.5,254.6 40.0,258.9" fill="#f8f0f0" stroke="#c850a0" stroke-width="1.3"/><line x1="33.5" y1="254.1" x2="33.5" y2="251.1" stroke="#30a040" stroke-width="1"/><line x1="40.5" y1="254.1" x2="40.5" y2="251.1" stroke="#30a040" stroke-width="1"/><line x1="32.5" y1="259.4" x2="40.5" y2="259.4" stroke="#3a3820" stroke-width="0.8"/><polygon points="32.5,269.7 34.5,265.4 41.5,265.4 40.0,269.7" fill="#f8f0f0" stroke="#c850a0" stroke-width="1.3"/><line x1="33.5" y1="264.9" x2="33.5" y2="261.9" stroke="#30a040" stroke-width="1"/><line x1="40.5" y1="264.9" x2="40.5" y2="261.9" stroke="#30a040" stroke-width="1"/><line x1="32.5" y1="270.2" x2="40.5" y2="270.2" stroke="#3a3820" stroke-width="0.8"/><polygon points="32.5,279.7 36.5,273.7 41.5,275.7 38.5,280.7" fill="#e8dc20" stroke="#3a3820" stroke-width="0.8"/><polygon points="35.5,276.7 38.5,274.7 39.5,277.7" fill="#c03030"/><line x1="32.5" y1="280.7" x2="39.5" y2="281.2" stroke="#30a040" stroke-width="1"/><polygon points="32.5,287.5 35.5,284.0 41.5,284.0 39.5,287.5" fill="#30a040" stroke="#1a5020" stroke-width="0.8"/><rect x="32.5" y="287.5" width="8" height="3.5" fill="#e8dc20" stroke="#3a3820" stroke-width="0.8"/><rect x="33.0" y="290.5" width="2" height="1.8" fill="#c03030"/><rect x="37.0" y="290.5" width="2" height="1.8" fill="#c03030"/><polygon points="21.0,302.3 21.5,295.3 26.0,294.3 30.0,301.8" fill="#e8dc20" stroke="#3a3820" stroke-width="0.8"/><line x1="23.0" y1="296.3" x2="27.0" y2="300.3" stroke="#222" stroke-width="1.2"/><line x1="21.0" y1="302.8" x2="30.0" y2="302.8" stroke="#3a3820" stroke-width="1"/><rect x="12.0" y="295.776" width="5" height="5" fill="#fff" stroke="#909090" stroke-width="0.8"/><line x1="13.0" y1="298.276" x2="16.0" y2="298.276" stroke="#000" stroke-width="0.8"/><rect x="32.5" y="304.9" width="4" height="3.5" fill="#2030b0"/><rect x="37.0" y="304.9" width="4.5" height="3.5" fill="#e8dc20" stroke="#3a3820" stroke-width="0.6"/><rect x="32.5" y="309.3" width="4" height="4" fill="#f0e8e8" stroke="#a03030" stroke-width="1"/><rect x="37.5" y="309.3" width="4" height="4" fill="#f0e8e8" stroke="#a03030" stroke-width="1"/><rect x="32.5" y="315.7" width="4" height="3.5" fill="#2030b0"/><rect x="37.0" y="315.7" width="4.5" height="3.5" fill="#e8dc20" stroke="#3a3820" stroke-width="0.6"/><rect x="32.5" y="320.1" width="4" height="4" fill="#f0e8e8" stroke="#a03030" stroke-width="1"/><rect x="37.5" y="320.1" width="4" height="4" fill="#f0e8e8" stroke="#a03030" stroke-width="1"/><rect x="32.5" y="326.5" width="4" height="3.5" fill="#2030b0"/><rect x="37.0" y="326.5" width="4.5" height="3.5" fill="#e8dc20" stroke="#3a3820" stroke-width="0.6"/><rect x="32.5" y="330.9" width="4" height="4" fill="#f0e8e8" stroke="#a03030" stroke-width="1"/><rect x="37.5" y="330.9" width="4" height="4" fill="#f0e8e8" stroke="#a03030" stroke-width="1"/><polygon points="32.3,340.0 35.5,340.0 36.5,341.0 40.5,341.0 40.5,345.7 32.3,345.7" fill="#5a5a10" stroke="#3a3820" stroke-width="0.8"/><polygon points="34.0,342.5 42.3,342.5 40.5,345.7 32.3,345.7" fill="#e8dc20" stroke="#3a3820" stroke-width="0.7"/><line x1="38.5" y1="338.5" x2="41.5" y2="338.5" stroke="#333" stroke-width="0.9"/><polygon points="32.5,356.3 34.5,349.3 38.5,348.3 41.5,351.3 39.5,356.3" fill="#e8dc20" stroke="#3a3820" stroke-width="0.8"/><line x1="33.5" y1="355.3" x2="39.5" y2="349.3" stroke="#2030b0" stroke-width="1.4"/><rect x="32.5" y="348.3" width="3" height="3" fill="#a0a0a0"/><rect x="23.5" y="349.796" width="5" height="5" fill="#fff" stroke="#909090" stroke-width="0.8"/><line x1="24.5" y1="352.296" x2="27.5" y2="352.296" stroke="#000" stroke-width="0.8"/><line x1="26" y1="350.796" x2="26" y2="353.796" stroke="#000" stroke-width="0.8"/><rect x="32.5" y="358.9" width="4" height="3.5" fill="#2030b0"/><rect x="37.0" y="358.9" width="4.5" height="3.5" fill="#e8dc20" stroke="#3a3820" stroke-width="0.6"/><rect x="32.5" y="363.3" width="4" height="4" fill="#f0e8e8" stroke="#a03030" stroke-width="1"/><rect x="37.5" y="363.3" width="4" height="4" fill="#f0e8e8" stroke="#a03030" stroke-width="1"/><line x1="21.5" y1="369.9" x2="21.5" y2="378.4" stroke="#2a5a20" stroke-width="1.4"/><rect x="23.0" y="372.9" width="3" height="3" fill="#2030b0"/><polygon points="26.0,377.4 28.0,373.9 30.0,377.4" fill="#2030b0"/><line x1="21.0" y1="378.4" x2="30.5" y2="378.4" stroke="#2a5a20" stroke-width="1"/><rect x="12.0" y="371.404" width="5" height="5" fill="#fff" stroke="#909090" stroke-width="0.8"/><line x1="13.0" y1="373.904" x2="16.0" y2="373.904" stroke="#000" stroke-width="0.8"/><line x1="32.5" y1="388.7" x2="41.5" y2="388.7" stroke="#2030a8" stroke-width="1.4"/><polygon points="34.5,387.7 37.0,383.7 39.5,387.7" fill="#d0d8ff" stroke="#2030a8" stroke-width="1"/><line x1="34.5" y1="382.2" x2="39.5" y2="382.2" stroke="#2030a8" stroke-width="1.1"/><rect x="23.5" y="382.208" width="5" height="5" fill="#fff" stroke="#909090" stroke-width="0.8"/><line x1="24.5" y1="384.708" x2="27.5" y2="384.708" stroke="#000" stroke-width="0.8"/><line x1="26" y1="383.208" x2="26" y2="386.208" stroke="#000" stroke-width="0.8"/><line x1="33.5" y1="391.3" x2="33.5" y2="400.0" stroke="#608020" stroke-width="1.5"/><line x1="33.5" y1="395.5" x2="41.0" y2="395.5" stroke="#2030a8" stroke-width="1.3"/><polygon points="34.5,393.5 37.5,395.5 34.5,397.5" fill="#2030a8"/><polygon points="32.0,408.3 35.5,404.3 42.0,404.3 39.5,408.3" fill="#e8dc20" stroke="#3a3820" stroke-width="0.8"/><rect x="35.0" y="404.8" width="3.5" height="3" fill="#3080e0"/><line x1="32.0" y1="409.3" x2="39.5" y2="409.3" stroke="#30a040" stroke-width="1"/><rect x="32.3" y="412.9" width="9.5" height="2" fill="#b4b020" stroke="#60600a" stroke-width="0.6"/><rect x="32.3" y="419.6" width="9.5" height="2" fill="#b4b020" stroke="#60600a" stroke-width="0.6"/><line x1="37.0" y1="414.9" x2="37.0" y2="419.6" stroke="#a01828" stroke-width="1.5"/><rect x="32.3" y="423.7" width="9.5" height="2" fill="#b4b020" stroke="#60600a" stroke-width="0.6"/><rect x="32.3" y="430.4" width="9.5" height="2" fill="#b4b020" stroke="#60600a" stroke-width="0.6"/><line x1="37.0" y1="425.7" x2="37.0" y2="430.4" stroke="#a01828" stroke-width="1.5"/><line x1="33.0" y1="434.9" x2="41.0" y2="442.7" stroke="#a0a020" stroke-width="1.6"/><line x1="41.0" y1="434.9" x2="33.0" y2="442.7" stroke="#a0a020" stroke-width="1.6"/><rect x="35.5" y="437.3" width="3" height="3" fill="#1828c0"/><line x1="32.0" y1="450.0" x2="42.0" y2="450.0" stroke="#c8b810" stroke-width="2.2"/><line x1="37.0" y1="445.0" x2="37.0" y2="454.5" stroke="#2030b0" stroke-width="1"/><rect x="36.0" y="448.5" width="2" height="3" fill="#2030b0"/><ellipse cx="37.0" cy="462.336" rx="5" ry="2.2" fill="#e8dc20" stroke="#3a3820" stroke-width="0.7"/><circle cx="36.0" cy="462.336" r="1.9" fill="#1828c0"/><line x1="35.0" y1="455.8" x2="35.0" y2="458.8" stroke="#2030c0" stroke-width="1"/><line x1="38.5" y1="456.3" x2="38.5" y2="459.3" stroke="#c02020" stroke-width="1"/><line x1="32.0" y1="473.1" x2="42.0" y2="473.1" stroke="#c8b810" stroke-width="2.2"/><line x1="32.5" y1="469.1" x2="36.0" y2="469.1" stroke="#222" stroke-width="1.2"/><line x1="38.0" y1="469.1" x2="41.5" y2="469.1" stroke="#222" stroke-width="1.2"/><line x1="32.0" y1="474.6" x2="42.0" y2="474.6" stroke="#3a3820" stroke-width="0.7"/><rect x="22.5" y="478.4" width="7.5" height="8.5" fill="#e8dc20" stroke="#222" stroke-width="1"/><rect x="21.0" y="477.4" width="4" height="3" fill="#fff" stroke="#222" stroke-width="0.8"/><line x1="24.5" y1="481.4" x2="28.5" y2="481.4" stroke="#222" stroke-width="0.8"/><line x1="24.5" y1="483.9" x2="28.5" y2="483.9" stroke="#222" stroke-width="0.8"/><line x1="21.0" y1="497.2" x2="30.5" y2="497.2" stroke="#222" stroke-width="1.2"/><polygon points="22.0,496.7 23.0,490.7 26.0,494.7" fill="#30a0a0" stroke="#205050" stroke-width="0.8"/><line x1="25.0" y1="495.7" x2="30.0" y2="488.7" stroke="#2030c0" stroke-width="1.6"/><rect x="12.0" y="490.248" width="5" height="5" fill="#fff" stroke="#909090" stroke-width="0.8"/><line x1="13.0" y1="492.748" x2="16.0" y2="492.748" stroke="#000" stroke-width="0.8"/><path d="M33.5,508.052 V500.552 H40.5" fill="none" stroke="#c03040" stroke-width="1.2"/><circle cx="38.0" cy="505.052" r="2.6" fill="none" stroke="#c03040" stroke-width="1.2"/><rect x="23.5" y="501.052" width="5" height="5" fill="#fff" stroke="#909090" stroke-width="0.8"/><line x1="24.5" y1="503.552" x2="27.5" y2="503.552" stroke="#000" stroke-width="0.8"/><path d="M44.5,511.356 H52.5 V515.356 H47.5 V519.356" fill="none" stroke="#c03040" stroke-width="1.3"/><text x="43.0" y="530.1600000000001" font-size="12.5" font-weight="bold" fill="#111" font-family="Liberation Serif, serif">A</text><path d="M33.0,540.4639999999999 Q33.5,532.9639999999999 39.5,532.4639999999999" fill="none" stroke="#c03040" stroke-width="1.3"/><path d="M37.5,540.4639999999999 Q37.5,535.9639999999999 41.5,534.9639999999999" fill="none" stroke="#555" stroke-width="1.1"/><rect x="23.5" y="533.4639999999999" width="5" height="5" fill="#fff" stroke="#909090" stroke-width="0.8"/><line x1="24.5" y1="535.9639999999999" x2="27.5" y2="535.9639999999999" stroke="#000" stroke-width="0.8"/><line x1="26" y1="534.4639999999999" x2="26" y2="537.4639999999999" stroke="#000" stroke-width="0.8"/><circle cx="38.5" cy="544.768" r="2.3" fill="#f0d0d0" stroke="#c03040" stroke-width="1.2"/><polygon points="32.5,550.8 34.5,547.3 40.5,547.3 38.5,550.8" fill="#f4e0e0" stroke="#c03040" stroke-width="1.1"/><rect x="23.5" y="544.268" width="5" height="5" fill="#fff" stroke="#909090" stroke-width="0.8"/><line x1="24.5" y1="546.768" x2="27.5" y2="546.768" stroke="#000" stroke-width="0.8"/><line x1="26" y1="545.268" x2="26" y2="548.268" stroke="#000" stroke-width="0.8"/><polygon points="32.5,556.6 37.5,554.6 41.5,553.6 39.5,557.6 36.5,561.6 34.5,558.6" fill="#208080" stroke="#104040" stroke-width="0.8"/><line x1="39.5" y1="554.6" x2="42.0" y2="553.1" stroke="#2030c0" stroke-width="1.2"/><rect x="23.5" y="555.072" width="5" height="5" fill="#fff" stroke="#909090" stroke-width="0.8"/><line x1="24.5" y1="557.572" x2="27.5" y2="557.572" stroke="#000" stroke-width="0.8"/><line x1="26" y1="556.072" x2="26" y2="559.072" stroke="#000" stroke-width="0.8"/><polygon points="32.5,567.9 35.5,566.9 41.0,566.9 42.0,572.9 32.5,572.9" fill="#3a3820"/><polygon points="34.0,569.4 42.0,568.9 40.0,572.4 33.0,572.4" fill="#e8dc20" stroke="#3a3820" stroke-width="0.6"/><text x="32.5" y="566.576" font-size="4" font-weight="bold" fill="#111" font-family="Liberation Sans, sans-serif">DWG</text><rect x="22.0" y="575.0" width="8" height="3" fill="#e8dc20" stroke="#222" stroke-width="0.9"/><rect x="21.0" y="578.2" width="9" height="3" fill="#e04040" stroke="#222" stroke-width="0.9"/><rect x="22.0" y="581.2" width="8" height="3" fill="#50a0e0" stroke="#182070" stroke-width="0.9"/><rect x="12.0" y="576.6800000000001" width="5" height="5" fill="#fff" stroke="#909090" stroke-width="0.8"/><line x1="13.0" y1="579.1800000000001" x2="16.0" y2="579.1800000000001" stroke="#000" stroke-width="0.8"/><line x1="14.5" y1="577.6800000000001" x2="14.5" y2="580.6800000000001" stroke="#000" stroke-width="0.8"/><rect x="21.0" y="586.5" width="9.5" height="8" fill="#fff" stroke="#2a2a90" stroke-width="1.3"/><rect x="21.0" y="586.5" width="9.5" height="1.6" fill="#2a2a90"/><line x1="14.5" y1="96.0" x2="14.5" y2="590.0" stroke="#a0a0a0" stroke-width="0.8" stroke-dasharray="0.8,0.8"/><line x1="17.5" y1="93.0" x2="20" y2="93.0" stroke="#a0a0a0" stroke-width="0.8" stroke-dasharray="0.8,0.8"/><line x1="26" y1="103.8" x2="31.5" y2="103.8" stroke="#a0a0a0" stroke-width="0.8" stroke-dasharray="0.8,0.8"/><line x1="26" y1="114.6" x2="31.5" y2="114.6" stroke="#a0a0a0" stroke-width="0.8" stroke-dasharray="0.8,0.8"/><line x1="26" y1="125.4" x2="31.5" y2="125.4" stroke="#a0a0a0" stroke-width="0.8" stroke-dasharray="0.8,0.8"/><line x1="29" y1="136.2" x2="31.5" y2="136.2" stroke="#a0a0a0" stroke-width="0.8" stroke-dasharray="0.8,0.8"/><line x1="17.5" y1="147.0" x2="20" y2="147.0" stroke="#a0a0a0" stroke-width="0.8" stroke-dasharray="0.8,0.8"/><line x1="26" y1="157.8" x2="31.5" y2="157.8" stroke="#a0a0a0" stroke-width="0.8" stroke-dasharray="0.8,0.8"/><line x1="26" y1="168.6" x2="31.5" y2="168.6" stroke="#a0a0a0" stroke-width="0.8" stroke-dasharray="0.8,0.8"/><line x1="26" y1="179.4" x2="31.5" y2="179.4" stroke="#a0a0a0" stroke-width="0.8" stroke-dasharray="0.8,0.8"/><line x1="26" y1="190.2" x2="31.5" y2="190.2" stroke="#a0a0a0" stroke-width="0.8" stroke-dasharray="0.8,0.8"/><line x1="26" y1="201.0" x2="31.5" y2="201.0" stroke="#a0a0a0" stroke-width="0.8" stroke-dasharray="0.8,0.8"/><line x1="26" y1="211.8" x2="31.5" y2="211.8" stroke="#a0a0a0" stroke-width="0.8" stroke-dasharray="0.8,0.8"/><line x1="26" y1="222.6" x2="31.5" y2="222.6" stroke="#a0a0a0" stroke-width="0.8" stroke-dasharray="0.8,0.8"/><line x1="29" y1="233.5" x2="31.5" y2="233.5" stroke="#a0a0a0" stroke-width="0.8" stroke-dasharray="0.8,0.8"/><line x1="17.5" y1="244.3" x2="20" y2="244.3" stroke="#a0a0a0" stroke-width="0.8" stroke-dasharray="0.8,0.8"/><line x1="26" y1="255.1" x2="31.5" y2="255.1" stroke="#a0a0a0" stroke-width="0.8" stroke-dasharray="0.8,0.8"/><line x1="26" y1="265.9" x2="31.5" y2="265.9" stroke="#a0a0a0" stroke-width="0.8" stroke-dasharray="0.8,0.8"/><line x1="26" y1="276.7" x2="31.5" y2="276.7" stroke="#a0a0a0" stroke-width="0.8" stroke-dasharray="0.8,0.8"/><line x1="26" y1="287.5" x2="31.5" y2="287.5" stroke="#a0a0a0" stroke-width="0.8" stroke-dasharray="0.8,0.8"/><line x1="17.5" y1="298.3" x2="20" y2="298.3" stroke="#a0a0a0" stroke-width="0.8" stroke-dasharray="0.8,0.8"/><line x1="26" y1="309.1" x2="31.5" y2="309.1" stroke="#a0a0a0" stroke-width="0.8" stroke-dasharray="0.8,0.8"/><line x1="26" y1="319.9" x2="31.5" y2="319.9" stroke="#a0a0a0" stroke-width="0.8" stroke-dasharray="0.8,0.8"/><line x1="26" y1="330.7" x2="31.5" y2="330.7" stroke="#a0a0a0" stroke-width="0.8" stroke-dasharray="0.8,0.8"/><line x1="26" y1="341.5" x2="31.5" y2="341.5" stroke="#a0a0a0" stroke-width="0.8" stroke-dasharray="0.8,0.8"/><line x1="29" y1="352.3" x2="31.5" y2="352.3" stroke="#a0a0a0" stroke-width="0.8" stroke-dasharray="0.8,0.8"/><line x1="26" y1="363.1" x2="31.5" y2="363.1" stroke="#a0a0a0" stroke-width="0.8" stroke-dasharray="0.8,0.8"/><line x1="17.5" y1="373.9" x2="20" y2="373.9" stroke="#a0a0a0" stroke-width="0.8" stroke-dasharray="0.8,0.8"/><line x1="29" y1="384.7" x2="31.5" y2="384.7" stroke="#a0a0a0" stroke-width="0.8" stroke-dasharray="0.8,0.8"/><line x1="26" y1="395.5" x2="31.5" y2="395.5" stroke="#a0a0a0" stroke-width="0.8" stroke-dasharray="0.8,0.8"/><line x1="26" y1="406.3" x2="31.5" y2="406.3" stroke="#a0a0a0" stroke-width="0.8" stroke-dasharray="0.8,0.8"/><line x1="26" y1="417.1" x2="31.5" y2="417.1" stroke="#a0a0a0" stroke-width="0.8" stroke-dasharray="0.8,0.8"/><line x1="26" y1="427.9" x2="31.5" y2="427.9" stroke="#a0a0a0" stroke-width="0.8" stroke-dasharray="0.8,0.8"/><line x1="26" y1="438.7" x2="31.5" y2="438.7" stroke="#a0a0a0" stroke-width="0.8" stroke-dasharray="0.8,0.8"/><line x1="26" y1="449.5" x2="31.5" y2="449.5" stroke="#a0a0a0" stroke-width="0.8" stroke-dasharray="0.8,0.8"/><line x1="26" y1="460.3" x2="31.5" y2="460.3" stroke="#a0a0a0" stroke-width="0.8" stroke-dasharray="0.8,0.8"/><line x1="26" y1="471.1" x2="31.5" y2="471.1" stroke="#a0a0a0" stroke-width="0.8" stroke-dasharray="0.8,0.8"/><line x1="14.5" y1="481.9" x2="20" y2="481.9" stroke="#a0a0a0" stroke-width="0.8" stroke-dasharray="0.8,0.8"/><line x1="17.5" y1="492.7" x2="20" y2="492.7" stroke="#a0a0a0" stroke-width="0.8" stroke-dasharray="0.8,0.8"/><line x1="29" y1="503.6" x2="31.5" y2="503.6" stroke="#a0a0a0" stroke-width="0.8" stroke-dasharray="0.8,0.8"/><line x1="38" y1="514.4" x2="43" y2="514.4" stroke="#a0a0a0" stroke-width="0.8" stroke-dasharray="0.8,0.8"/><line x1="38" y1="525.2" x2="43" y2="525.2" stroke="#a0a0a0" stroke-width="0.8" stroke-dasharray="0.8,0.8"/><line x1="29" y1="536.0" x2="31.5" y2="536.0" stroke="#a0a0a0" stroke-width="0.8" stroke-dasharray="0.8,0.8"/><line x1="29" y1="546.8" x2="31.5" y2="546.8" stroke="#a0a0a0" stroke-width="0.8" stroke-dasharray="0.8,0.8"/><line x1="29" y1="557.6" x2="31.5" y2="557.6" stroke="#a0a0a0" stroke-width="0.8" stroke-dasharray="0.8,0.8"/><line x1="26" y1="568.4" x2="31.5" y2="568.4" stroke="#a0a0a0" stroke-width="0.8" stroke-dasharray="0.8,0.8"/><line x1="17.5" y1="579.2" x2="20" y2="579.2" stroke="#a0a0a0" stroke-width="0.8" stroke-dasharray="0.8,0.8"/><line x1="14.5" y1="590.0" x2="20" y2="590.0" stroke="#a0a0a0" stroke-width="0.8" stroke-dasharray="0.8,0.8"/><line x1="26" y1="98.0" x2="26" y2="136.2" stroke="#a0a0a0" stroke-width="0.8" stroke-dasharray="0.8,0.8"/><line x1="26" y1="152.0" x2="26" y2="233.5" stroke="#a0a0a0" stroke-width="0.8" stroke-dasharray="0.8,0.8"/><line x1="26" y1="249.3" x2="26" y2="287.5" stroke="#a0a0a0" stroke-width="0.8" stroke-dasharray="0.8,0.8"/><line x1="26" y1="303.3" x2="26" y2="363.1" stroke="#a0a0a0" stroke-width="0.8" stroke-dasharray="0.8,0.8"/><line x1="26" y1="378.9" x2="26" y2="471.1" stroke="#a0a0a0" stroke-width="0.8" stroke-dasharray="0.8,0.8"/><line x1="26" y1="497.7" x2="26" y2="568.4" stroke="#a0a0a0" stroke-width="0.8" stroke-dasharray="0.8,0.8"/><line x1="38" y1="507.6" x2="38" y2="525.2" stroke="#a0a0a0" stroke-width="0.8" stroke-dasharray="0.8,0.8"/><polygon points="947.2,71.3 952.8,71.3 950,68.3" fill="#000"/><polygon points="947.2,516.5 952.8,516.5 950,519.5" fill="#000"/><g transform="translate(167.5,625) scale(0.84) translate(-167.5,-625)"><polygon points="163.5,624.0 166.5,621.0 171.5,621.0 171.5,626.0 168.5,629.0 163.5,629.0" fill="#fff" stroke="#222" stroke-width="1" opacity="1"/><line x1="163.5" y1="624.0" x2="168.5" y2="624.0" stroke="#222" stroke-width="0.8" opacity="1"/><line x1="168.5" y1="624.0" x2="168.5" y2="629.0" stroke="#222" stroke-width="0.8" opacity="1"/><line x1="168.5" y1="624.0" x2="171.5" y2="621.0" stroke="#222" stroke-width="0.8" opacity="1"/></g><g transform="translate(180.5,625) scale(0.84) translate(-180.5,-625)"><polygon points="176.5,624.0 179.5,621.0 184.5,621.0 184.5,626.0 181.5,629.0 176.5,629.0" fill="#f0e020" stroke="#222" stroke-width="1" opacity="1"/><line x1="176.5" y1="624.0" x2="181.5" y2="624.0" stroke="#222" stroke-width="0.8" opacity="1"/><line x1="181.5" y1="624.0" x2="181.5" y2="629.0" stroke="#222" stroke-width="0.8" opacity="1"/><line x1="181.5" y1="624.0" x2="184.5" y2="621.0" stroke="#222" stroke-width="0.8" opacity="1"/></g><g transform="translate(195.5,625) scale(0.84) translate(-195.5,-625)"><line x1="195.5" y1="620.0" x2="195.5" y2="625.0" stroke="#8c8880" stroke-width="1" opacity="1"/><polygon points="191.5,629.0 195.5,624.0 199.5,629.0" fill="none" stroke="#8c8880" stroke-width="1" opacity="1"/><line x1="190.5" y1="630.0" x2="200.5" y2="630.0" stroke="#8c8880" stroke-width="1" opacity="1"/></g><g transform="translate(208,625) scale(0.84) translate(-208,-625)"><rect x="203.0" y="626.0" width="10" height="3" fill="#bcb8ae" opacity="1" rx="0"/><line x1="203.0" y1="626.0" x2="203.0" y2="621.0" stroke="#8c8880" stroke-width="0.8" opacity="1"/><line x1="206.0" y1="626.0" x2="206.0" y2="623.0" stroke="#8c8880" stroke-width="0.8" opacity="1"/><line x1="209.0" y1="626.0" x2="209.0" y2="624.0" stroke="#8c8880" stroke-width="0.8" opacity="1"/><line x1="212.0" y1="626.0" x2="212.0" y2="622.0" stroke="#8c8880" stroke-width="0.8" opacity="1"/></g><g transform="translate(221.7,625) scale(0.84) translate(-221.7,-625)"><rect x="216.7" y="620.5" width="10" height="3" fill="#c83030" opacity="1" rx="0"/><line x1="217.7" y1="620.5" x2="217.7" y2="630.0" stroke="#2030a0" stroke-width="1.2" opacity="1"/><line x1="217.7" y1="626.0" x2="224.7" y2="626.0" stroke="#2030a0" stroke-width="1.2" opacity="1"/><line x1="217.7" y1="629.5" x2="222.7" y2="629.5" stroke="#2030a0" stroke-width="1" opacity="1"/><rect x="218.7" y="621.2" width="7" height="1.4" fill="#f0d0d0" opacity="1" rx="0"/></g><g transform="translate(237,625) scale(0.84) translate(-237,-625)"><text x="231.5" y="624.5" font-size="5.5" font-weight="bold" fill="#111" font-family="Liberation Sans, sans-serif">ABC</text><line x1="232.0" y1="627.5" x2="242.0" y2="627.5" stroke="#2030c0" stroke-width="1.6" opacity="1"/><circle cx="234.0" cy="627.5" r="1.3" fill="#c03030" opacity="1"/></g><g transform="translate(249.6,625) scale(0.84) translate(-249.6,-625)"><text x="244.1" y="624.5" font-size="5.5" font-weight="bold" fill="#111" font-family="Liberation Sans, sans-serif">ABC</text><polygon points="244.6,628.0 247.6,625.5 254.6,625.5 252.6,629.5 244.6,629.5" fill="#d8cc30" stroke="#222" stroke-width="0.9" opacity="1"/></g><g transform="translate(264,625) scale(0.84) translate(-264,-625)"><polygon points="259.0,629.5 264.0,621.0 269.0,629.5" fill="#b0d8a0" stroke="#555" stroke-width="0.9" opacity="1"/><line x1="261.5" y1="625.5" x2="266.5" y2="625.5" stroke="#c03030" stroke-width="0.9" opacity="1"/><line x1="264.0" y1="621.0" x2="264.0" y2="629.5" stroke="#3040b0" stroke-width="0.9" opacity="1"/><line x1="260.5" y1="627.5" x2="267.5" y2="627.5" stroke="#c03030" stroke-width="0.9" opacity="1"/></g><g transform="translate(281,625) scale(0.84) translate(-281,-625)"><rect x="277.0" y="621.0" width="8" height="8.5" fill="#c4c0b6" opacity="1" rx="0"/><line x1="279.0" y1="621.0" x2="279.0" y2="629.5" stroke="#9c988c" stroke-width="1" opacity="1"/><line x1="281.5" y1="621.0" x2="281.5" y2="629.5" stroke="#9c988c" stroke-width="1" opacity="1"/><line x1="284.0" y1="621.0" x2="284.0" y2="629.5" stroke="#9c988c" stroke-width="1" opacity="1"/></g><g transform="translate(295.4,625) scale(0.84) translate(-295.4,-625)"><rect x="290.4" y="620.5" width="10" height="9.5" fill="#3848c0" stroke="#182070" stroke-width="1"/><rect x="292.4" y="622.5" width="5" height="5.5" fill="#e8e040" opacity="1" rx="0"/><rect x="296.4" y="621.0" width="3.5" height="4" fill="#e8e8ff" opacity="1" rx="0"/></g><g transform="translate(308,625) scale(0.84) translate(-308,-625)"><rect x="303" y="620.5" width="10" height="9.5" fill="#aca89e" stroke="#8c8880" stroke-width="1"/><rect x="305.0" y="622.5" width="4" height="5.5" fill="#d8d4cc" opacity="1" rx="0"/></g><polygon points="324,622 324,628 321,625" fill="#000"/><polygon points="776.5,622 776.5,628 779.5,625" fill="#000"/><g stroke="#fff" stroke-width="1.4" fill="none"><path d="M948.3,638.7 l4.6,4.6 M952.9,638.7 l-4.6,4.6"/></g><g stroke="#fff" stroke-width="1" fill="none"><rect x="938" y="637.8" width="3" height="3.6" fill="none"/><path d="M936.8,641.7 h5.4 M939.5,641.7 v3"/></g><g transform="translate(168.7,657) scale(0.84) translate(-168.7,-657)"><polygon points="165.7,652.0 165.7,661.0 167.9,659.0 169.7,662.5 171.0,661.8 169.3,658.5 172.2,658.5" fill="#fff" stroke="#111" stroke-width="0.9" opacity="1"/></g><g transform="translate(184,657) scale(0.84) translate(-184,-657)"><line x1="179.5" y1="661.5" x2="188.5" y2="661.5" stroke="#2030a8" stroke-width="1.5" opacity="1"/><polygon points="181.0,660.0 184.0,656.0 187.0,660.0" fill="none" stroke="#2030a8" stroke-width="1.2" opacity="1"/><line x1="181.0" y1="654.0" x2="187.0" y2="654.0" stroke="#2030a8" stroke-width="1.2" opacity="1"/></g><g transform="translate(197.5,657) scale(0.84) translate(-197.5,-657)"><line x1="193.5" y1="660.0" x2="201.5" y2="660.0" stroke="#2030a8" stroke-width="1.3" opacity="1"/><polygon points="195.0,659.0 197.5,656.0 200.0,659.0" fill="none" stroke="#2030a8" stroke-width="1.1" opacity="1"/><line x1="195.5" y1="654.5" x2="199.5" y2="654.5" stroke="#2030a8" stroke-width="1.1" opacity="1"/></g><g transform="translate(211,657) scale(0.84) translate(-211,-657)"><line x1="208.0" y1="652.5" x2="208.0" y2="661.5" stroke="#2030a8" stroke-width="1.6" opacity="1"/><line x1="208.0" y1="657.0" x2="215.5" y2="657.0" stroke="#2030a8" stroke-width="1.6" opacity="1"/></g><g transform="translate(224.6,657) scale(0.84) translate(-224.6,-657)"><line x1="219.6" y1="654.0" x2="229.6" y2="654.0" stroke="#2030a8" stroke-width="1.3" opacity="1"/><line x1="219.6" y1="656.5" x2="229.6" y2="656.5" stroke="#2030a8" stroke-width="1" opacity="1"/><line x1="219.6" y1="660.0" x2="225.6" y2="660.0" stroke="#c03030" stroke-width="1.5" opacity="1"/><polygon points="225.6,658.0 229.1,660.0 225.6,662.0" fill="#c03030" stroke="none" stroke-width="1" opacity="1"/><rect x="219.6" y="658.7" width="2" height="2.6" fill="#c03030" opacity="1" rx="0"/></g><g transform="translate(237,657) scale(0.84) translate(-237,-657)"><line x1="232.0" y1="654.0" x2="242.0" y2="654.0" stroke="#2030a8" stroke-width="1.3" opacity="1"/><line x1="232.0" y1="656.5" x2="242.0" y2="656.5" stroke="#2030a8" stroke-width="1" opacity="1"/><line x1="232.0" y1="660.0" x2="238.0" y2="660.0" stroke="#c03030" stroke-width="1.5" opacity="1"/><polygon points="238.0,658.0 241.5,660.0 238.0,662.0" fill="#c03030" stroke="none" stroke-width="1" opacity="1"/><rect x="232.0" y="658.7" width="2" height="2.6" fill="#c03030" opacity="1" rx="0"/></g><g transform="translate(251,657) scale(0.84) translate(-251,-657)"><line x1="246.0" y1="654.0" x2="256.0" y2="654.0" stroke="#2030a8" stroke-width="1.3" opacity="1"/><line x1="246.0" y1="656.5" x2="256.0" y2="656.5" stroke="#2030a8" stroke-width="1" opacity="1"/><line x1="246.0" y1="660.0" x2="252.0" y2="660.0" stroke="#c03030" stroke-width="1.5" opacity="1"/><polygon points="252.0,658.0 255.5,660.0 252.0,662.0" fill="#c03030" stroke="none" stroke-width="1" opacity="1"/><rect x="246.0" y="658.7" width="2" height="2.6" fill="#c03030" opacity="1" rx="0"/></g><g transform="translate(671.7,657) scale(0.84) translate(-671.7,-657)"><line x1="667.7" y1="653.0" x2="675.7" y2="661.0" stroke="#9c988c" stroke-width="1.1" opacity="1"/><circle cx="668.2" cy="653.5" r="1" fill="#9c988c" opacity="1"/></g><g transform="translate(684,657) scale(0.84) translate(-684,-657)"><line x1="680.0" y1="654.0" x2="688.0" y2="660.0" stroke="#9c988c" stroke-width="1.1" opacity="1"/><circle cx="687.5" cy="660.0" r="1.1" fill="#9c988c" opacity="1"/></g><g transform="translate(697.5,657) scale(0.84) translate(-697.5,-657)"><circle cx="697.5" cy="657.0" r="3.2" fill="none" opacity="1" stroke="#9c988c" stroke-width="1.1"/><circle cx="697.5" cy="657.0" r="0.9" fill="#9c988c" opacity="1"/></g><g transform="translate(711,657) scale(0.84) translate(-711,-657)"><line x1="707.0" y1="653.0" x2="715.0" y2="661.0" stroke="#9c988c" stroke-width="1.1" opacity="1"/><line x1="715.0" y1="653.0" x2="707.0" y2="661.0" stroke="#9c988c" stroke-width="1.1" opacity="1"/></g><g transform="translate(729,657) scale(0.84) translate(-729,-657)"><line x1="725.0" y1="661.0" x2="729.0" y2="654.0" stroke="#9c988c" stroke-width="1.1" opacity="1"/><line x1="729.0" y1="654.0" x2="733.0" y2="661.0" stroke="#9c988c" stroke-width="1.1" opacity="1"/></g><g transform="translate(742,657) scale(0.84) translate(-742,-657)"><line x1="738.0" y1="660.0" x2="746.0" y2="654.0" stroke="#9c988c" stroke-width="1.1" opacity="1"/><circle cx="743.0" cy="656.2" r="1.1" fill="#9c988c" opacity="1"/></g><g transform="translate(756,657) scale(0.84) translate(-756,-657)"><rect x="752" y="653" width="7" height="6" fill="none" stroke="#9c988c" stroke-width="1" stroke-dasharray="1.5,1"/><line x1="756.0" y1="657.0" x2="760.0" y2="661.5" stroke="#9c988c" stroke-width="1.1" opacity="1"/></g><g transform="translate(770,657) scale(0.84) translate(-770,-657)"><path d="M766,660 Q770,654 774,655" fill="none" stroke="#9c988c" stroke-width="1.1"/><circle cx="774.0" cy="655.0" r="1" fill="#9c988c" opacity="1"/></g><g transform="translate(787,657) scale(0.84) translate(-787,-657)"><line x1="783.0" y1="653.0" x2="791.0" y2="661.0" stroke="#2838c0" stroke-width="1.8" opacity="1"/><line x1="791.0" y1="653.0" x2="786.0" y2="658.0" stroke="#2838c0" stroke-width="1.8" opacity="1"/><rect x="782.0" y="652.0" width="3.5" height="3.5" fill="#c03030" opacity="1" rx="0"/><line x1="785.0" y1="662.0" x2="790.0" y2="659.0" stroke="#2838c0" stroke-width="1.2" opacity="1"/></g><g transform="translate(803,657) scale(0.84) translate(-803,-657)"><rect x="798.2" y="652.5" width="1.3" height="1.3" fill="#333" opacity="1" rx="0"/><rect x="798.2" y="655.1" width="1.3" height="1.3" fill="#333" opacity="1" rx="0"/><rect x="798.2" y="657.7" width="1.3" height="1.3" fill="#333" opacity="1" rx="0"/><rect x="798.2" y="660.3" width="1.3" height="1.3" fill="#333" opacity="1" rx="0"/><rect x="800.8" y="652.5" width="1.3" height="1.3" fill="#333" opacity="1" rx="0"/><rect x="800.8" y="655.1" width="1.3" height="1.3" fill="#333" opacity="1" rx="0"/><rect x="800.8" y="657.7" width="1.3" height="1.3" fill="#333" opacity="1" rx="0"/><rect x="800.8" y="660.3" width="1.3" height="1.3" fill="#333" opacity="1" rx="0"/><rect x="803.4" y="652.5" width="1.3" height="1.3" fill="#333" opacity="1" rx="0"/><rect x="803.4" y="655.1" width="1.3" height="1.3" fill="#333" opacity="1" rx="0"/><rect x="803.4" y="657.7" width="1.3" height="1.3" fill="#333" opacity="1" rx="0"/><rect x="803.4" y="660.3" width="1.3" height="1.3" fill="#333" opacity="1" rx="0"/><rect x="806.0" y="652.5" width="1.3" height="1.3" fill="#333" opacity="1" rx="0"/><rect x="806.0" y="655.1" width="1.3" height="1.3" fill="#333" opacity="1" rx="0"/><rect x="806.0" y="657.7" width="1.3" height="1.3" fill="#333" opacity="1" rx="0"/><rect x="806.0" y="660.3" width="1.3" height="1.3" fill="#333" opacity="1" rx="0"/></g><g transform="translate(816,657) scale(0.84) translate(-816,-657)"><line x1="811.0" y1="661.5" x2="821.0" y2="661.5" stroke="#2030a8" stroke-width="1.4" opacity="1"/><line x1="814.0" y1="653.0" x2="814.0" y2="661.5" stroke="#2030a8" stroke-width="1.3" opacity="1"/><line x1="818.0" y1="653.0" x2="818.0" y2="661.5" stroke="#2030a8" stroke-width="1.3" opacity="1"/><line x1="812.0" y1="653.0" x2="820.0" y2="653.0" stroke="#2030a8" stroke-width="1" opacity="1"/><rect x="813.0" y="656.0" width="6" height="1.5" fill="#c03030" opacity="1" rx="0"/></g><g transform="translate(830,657) scale(0.84) translate(-830,-657)"><line x1="825.5" y1="652.5" x2="834.5" y2="661.5" stroke="#111" stroke-width="1.3" opacity="1"/><line x1="834.5" y1="652.5" x2="825.5" y2="661.5" stroke="#209030" stroke-width="1.6" opacity="1"/><circle cx="830.0" cy="657.0" r="1.5" fill="#209030" opacity="1"/></g><g transform="translate(843,657) scale(0.84) translate(-843,-657)"><line x1="838.5" y1="652.5" x2="847.5" y2="661.5" stroke="#111" stroke-width="1.1" opacity="1"/><circle cx="841.0" cy="655.0" r="1.6" fill="#d02020" opacity="1"/><line x1="838.0" y1="659.0" x2="842.0" y2="662.0" stroke="#111" stroke-width="0.8" opacity="1"/></g><g transform="translate(856.7,657) scale(0.84) translate(-856.7,-657)"><line x1="852.2" y1="652.5" x2="861.2" y2="661.5" stroke="#111" stroke-width="1.1" opacity="1"/><circle cx="856.7" cy="657.0" r="1.6" fill="#d02020" opacity="1"/><line x1="852.7" y1="656.0" x2="852.7" y2="660.0" stroke="#111" stroke-width="0.8" opacity="1"/></g><g transform="translate(870.4,657) scale(0.84) translate(-870.4,-657)"><line x1="865.9" y1="652.5" x2="874.9" y2="661.5" stroke="#111" stroke-width="1.1" opacity="1"/><line x1="874.9" y1="652.5" x2="865.9" y2="661.5" stroke="#111" stroke-width="1.1" opacity="1"/><circle cx="870.4" cy="657.0" r="1.6" fill="#d02020" opacity="1"/></g><g transform="translate(883,657) scale(0.84) translate(-883,-657)"><line x1="878.5" y1="652.5" x2="887.5" y2="661.5" stroke="#111" stroke-width="1.1" opacity="1"/><polygon points="879.0,654.0 887.0,654.0 885.0,660.0 881.0,660.0" fill="none" stroke="#111" stroke-width="1" opacity="1"/><circle cx="883.0" cy="660.5" r="1.6" fill="#d02020" opacity="1"/><line x1="881.0" y1="652.0" x2="885.0" y2="662.0" stroke="#2030a8" stroke-width="0.9" opacity="1"/></g><g transform="translate(896,657) scale(0.84) translate(-896,-657)"><line x1="891.5" y1="652.5" x2="900.5" y2="661.5" stroke="#111" stroke-width="1.1" opacity="1"/><path d="M891,661 Q896,649 901,657" fill="none" stroke="#111" stroke-width="1.1"/><circle cx="899.5" cy="659.5" r="1.6" fill="#d02020" opacity="1"/><circle cx="892.5" cy="654.0" r="1.2" fill="#d02020" opacity="1"/></g><g transform="translate(908,657) scale(0.84) translate(-908,-657)"><line x1="903.5" y1="652.5" x2="912.5" y2="661.5" stroke="#111" stroke-width="1.1" opacity="1"/><rect x="904" y="653.5" width="7" height="7" fill="none" stroke="#111" stroke-width="1.1"/><circle cx="911.5" cy="660.5" r="1.6" fill="#d02020" opacity="1"/><circle cx="904.0" cy="653.5" r="1.2" fill="#d02020" opacity="1"/></g><g transform="translate(921.7,657) scale(0.84) translate(-921.7,-657)"><line x1="917.2" y1="652.5" x2="926.2" y2="661.5" stroke="#111" stroke-width="1.1" opacity="1"/><path d="M916.7,654 Q920.7,663 926.7,653" fill="none" stroke="#111" stroke-width="1.1"/><circle cx="921.2" cy="659.0" r="1.6" fill="#d02020" opacity="1"/></g><g transform="translate(936,657) scale(0.84) translate(-936,-657)"><rect x="931.0" y="655.0" width="10" height="5.5" fill="#f0c860" opacity="1" rx="0"/><rect x="931" y="655" width="10" height="5.5" fill="none" stroke="#7a5a10" stroke-width="0.9"/><line x1="932.5" y1="657.5" x2="932.5" y2="660.5" stroke="#c03030" stroke-width="0.8" opacity="1"/><line x1="934.8" y1="657.5" x2="934.8" y2="660.5" stroke="#c03030" stroke-width="0.8" opacity="1"/><line x1="937.1" y1="657.5" x2="937.1" y2="660.5" stroke="#c03030" stroke-width="0.8" opacity="1"/><line x1="939.4" y1="657.5" x2="939.4" y2="660.5" stroke="#c03030" stroke-width="0.8" opacity="1"/><line x1="931.0" y1="653.0" x2="941.0" y2="653.0" stroke="#7a5a10" stroke-width="0.9" opacity="1"/></g><g transform="translate(949.6,657) scale(0.84) translate(-949.6,-657)"><rect x="947.1" y="653.0" width="5.5" height="9" fill="#e8b850" opacity="1" rx="0"/><rect x="947.1" y="653" width="5.5" height="9" fill="none" stroke="#7a5a10" stroke-width="0.9"/><line x1="944.6" y1="653.0" x2="947.6" y2="653.0" stroke="#30a040" stroke-width="1.2" opacity="1"/><line x1="944.6" y1="655.0" x2="946.6" y2="655.0" stroke="#30a040" stroke-width="1" opacity="1"/></g><g transform="translate(4,704)"><path d="M0.5,1.5 q2,-1.5 4,0 v3.5 q-2,-1.5 -4,0z" fill="#e04020"/><path d="M5.2,1.7 q2,1.3 4,-0.2 v3.5 q-2,1.5 -4,0.2z" fill="#30a030"/><path d="M0.5,6 q2,-1.5 4,0 v3.5 q-2,-1.5 -4,0z" fill="#2050d0"/><path d="M5.2,6.2 q2,1.3 4,-0.2 v3.5 q-2,1.5 -4,0.2z" fill="#e8c020"/></g><g transform="translate(45,704)"><path d="M0,1 l5,0 l-1,9 z" fill="#e04030"/><path d="M5,1 l6,0 l-4,5 z" fill="#30a0e0"/><path d="M7,6 l4,-5 l-1,7z" fill="#e8c020"/></g><g transform="translate(145,704)"><path d="M2,1 l3,0 l2,9 l-3,0 z" fill="#c09040"/><path d="M6,0 l3,1 l-3,9 l-2,-1z" fill="#808890"/><rect x="3" y="8" width="5" height="2.5" fill="#4060c0"/></g><g transform="translate(2,2)"><path d="M0,0.5 l5.5,0 l-1,9.5 z" fill="#e04030"/><path d="M5.5,0.5 l6,0 l-4,5 z" fill="#40b0f0"/><path d="M7.5,5.5 l4,-5 l-1,7z" fill="#e8d020"/><path d="M2,1 l3,0 l-0.5,3z" fill="#40c040"/></g><g transform="translate(8,17)"><rect x="0" y="0" width="10" height="10.5" fill="#fff" stroke="#b02020" stroke-width="1.3"/><path d="M2,2 v4 M4,2 v4 M6,2 v4 M8,2 v4" stroke="#b02020" stroke-width="1"/><path d="M7,8 l4,2 l-2,2z" fill="#2030a0"/></g><polygon points="269.5,74.5 277,74.5 273.2,78.3" fill="#fff"/><g stroke="#fff" stroke-width="1.4" fill="none"><path d="M283.3,74 l4.8,4.8 M288.1,74 l-4.8,4.8"/></g><g transform="translate(182,89) scale(0.84) translate(-182,-89)"><ellipse cx="182" cy="91.2" rx="4.2" ry="3" fill="#30c8b8" stroke="#106860" stroke-width="0.9"/><circle cx="182.0" cy="91.3" r="1.5" fill="#102020" opacity="1"/><line x1="182.0" y1="83.5" x2="182.0" y2="88.0" stroke="#2030b0" stroke-width="1.3" opacity="1"/><line x1="179.0" y1="84.0" x2="181.0" y2="88.0" stroke="#c03030" stroke-width="1.3" opacity="1"/></g><g transform="translate(195.5,89) scale(0.84) translate(-195.5,-89)"><ellipse cx="195.5" cy="91.2" rx="4.2" ry="3" fill="#30c8b8" stroke="#106860" stroke-width="0.9"/><circle cx="195.5" cy="91.3" r="1.5" fill="#102020" opacity="1"/><line x1="195.5" y1="83.5" x2="195.5" y2="88.0" stroke="#2030b0" stroke-width="1.3" opacity="1"/><line x1="192.5" y1="84.0" x2="194.5" y2="88.0" stroke="#c03030" stroke-width="1.3" opacity="1"/><line x1="191.0" y1="85.0" x2="193.5" y2="85.0" stroke="#333" stroke-width="1" opacity="1"/></g><g transform="translate(209,89) scale(0.84) translate(-209,-89)"><ellipse cx="209" cy="91.2" rx="4.2" ry="3" fill="#30c8b8" stroke="#106860" stroke-width="0.9"/><circle cx="209.0" cy="91.3" r="1.5" fill="#102020" opacity="1"/><line x1="209.0" y1="83.5" x2="209.0" y2="88.0" stroke="#2030b0" stroke-width="1.3" opacity="1"/><line x1="206.0" y1="84.0" x2="208.0" y2="88.0" stroke="#c03030" stroke-width="1.3" opacity="1"/></g><g transform="translate(222,89) scale(0.84) translate(-222,-89)"><ellipse cx="222" cy="91.2" rx="4.2" ry="3" fill="#30c8b8" stroke="#106860" stroke-width="0.9"/><circle cx="222.0" cy="91.3" r="1.5" fill="#102020" opacity="1"/><line x1="222.0" y1="83.5" x2="222.0" y2="88.0" stroke="#2030b0" stroke-width="1.3" opacity="1"/></g><g transform="translate(235,89) scale(0.84) translate(-235,-89)"><line x1="233.0" y1="84.0" x2="233.0" y2="92.0" stroke="#3040c0" stroke-width="1.5" opacity="1"/><line x1="233.0" y1="92.0" x2="240.0" y2="91.0" stroke="#d03040" stroke-width="1.5" opacity="1"/><line x1="233.0" y1="92.0" x2="230.0" y2="94.0" stroke="#30b040" stroke-width="1.5" opacity="1"/><rect x="234.0" y="87.0" width="3" height="3" fill="#e060a0" opacity="0.9" rx="0"/></g><g transform="translate(248.5,89) scale(0.84) translate(-248.5,-89)"><circle cx="247.8" cy="88.0" r="3.8" fill="#fff" opacity="1" stroke="#207870" stroke-width="1.5"/><line x1="250.5" y1="91.0" x2="253.8" y2="94.5" stroke="#111" stroke-width="1.8" opacity="1"/><line x1="246.0" y1="88.0" x2="249.5" y2="88.0" stroke="#111" stroke-width="1" opacity="1"/><line x1="247.8" y1="86.2" x2="247.8" y2="89.8" stroke="#111" stroke-width="1" opacity="1"/></g><g transform="translate(262,89) scale(0.84) translate(-262,-89)"><circle cx="261.3" cy="88.0" r="3.8" fill="#fff" opacity="1" stroke="#207870" stroke-width="1.5"/><line x1="264.0" y1="91.0" x2="267.3" y2="94.5" stroke="#111" stroke-width="1.8" opacity="1"/><line x1="259.5" y1="88.0" x2="263.0" y2="88.0" stroke="#111" stroke-width="1" opacity="1"/></g><g transform="translate(275.5,89) scale(0.84) translate(-275.5,-89)"><circle cx="274.8" cy="88.0" r="3.8" fill="#fff" opacity="1" stroke="#207870" stroke-width="1.5"/><line x1="277.5" y1="91.0" x2="280.8" y2="94.5" stroke="#111" stroke-width="1.8" opacity="1"/><rect x="273.0" y="86.3" width="3.6" height="3.2" fill="none" stroke="#111" stroke-width="0.8"/></g><g transform="translate(182,105) scale(0.84) translate(-182,-105)"><circle cx="181.3" cy="104.0" r="3.8" fill="#fff" opacity="1" stroke="#207870" stroke-width="1.5"/><line x1="184.0" y1="107.0" x2="187.3" y2="110.5" stroke="#111" stroke-width="1.8" opacity="1"/><line x1="176.5" y1="109.5" x2="182.0" y2="109.5" stroke="#111" stroke-width="1" opacity="1"/><line x1="176.5" y1="108.0" x2="176.5" y2="111.0" stroke="#111" stroke-width="0.8" opacity="1"/><line x1="182.0" y1="108.0" x2="182.0" y2="111.0" stroke="#111" stroke-width="0.8" opacity="1"/></g><g transform="translate(195.5,105) scale(0.84) translate(-195.5,-105)"><circle cx="194.8" cy="104.0" r="3.8" fill="#fff" opacity="1" stroke="#9c988c" stroke-width="1.5"/><line x1="197.5" y1="107.0" x2="200.8" y2="110.5" stroke="#9c988c" stroke-width="1.8" opacity="1"/></g><g transform="translate(209,105) scale(0.84) translate(-209,-105)"><polygon points="205.0,104.0 211.0,104.0 214.0,102.0 214.0,107.0 211.0,110.0 205.0,110.0" fill="#e8dc30" stroke="#332" stroke-width="1" opacity="1"/><line x1="211.0" y1="104.0" x2="211.0" y2="110.0" stroke="#332" stroke-width="0.8" opacity="1"/><line x1="207.0" y1="100.0" x2="207.0" y2="104.0" stroke="#2030b0" stroke-width="1.2" opacity="1"/><line x1="205.0" y1="101.0" x2="209.0" y2="101.0" stroke="#2030b0" stroke-width="0.8" opacity="1"/></g><g transform="translate(222,105) scale(0.84) translate(-222,-105)"><circle cx="222.0" cy="103.8" r="3.4" fill="#f8f040" opacity="1" stroke="#665" stroke-width="0.8"/><rect x="220.6" y="107.0" width="2.8" height="3" fill="#444" opacity="1" rx="0"/></g><g transform="translate(239.5,105) scale(0.84) translate(-239.5,-105)"><rect x="235.0" y="103.5" width="8" height="6.5" fill="#384088" opacity="1" rx="0"/><rect x="237.0" y="105.5" width="4" height="3.5" fill="#c04040" opacity="1" rx="0"/><path d="M238.5,103 Q241.5,99 244.5,104" fill="none" stroke="#406080" stroke-width="1.2"/></g><g transform="translate(254,105) scale(0.84) translate(-254,-105)"><rect x="249.5" y="103.5" width="8" height="6.5" fill="#b4b0a6" opacity="1" rx="0"/><rect x="251.5" y="105.5" width="4" height="3.5" fill="#c8c4ba" opacity="1" rx="0"/><path d="M253,103 Q256,99 259,104" fill="none" stroke="#aaa69c" stroke-width="1.2"/></g><g transform="translate(271.5,105) scale(0.84) translate(-271.5,-105)"><rect x="267.0" y="100.5" width="9" height="9" fill="#e8e030" stroke="#222" stroke-width="1.2"/><path d="M273.5,103 h-4 v4 h4" fill="none" stroke="#222" stroke-width="1.2"/></g><g transform="translate(285,105) scale(0.84) translate(-285,-105)"><rect x="280.5" y="102.5" width="7" height="7" fill="#e8e8f8" stroke="#2030a0" stroke-width="1.2"/><polygon points="280.5,102.5 283.0,100.0 290.0,100.0 287.5,102.5" fill="#4858d0" stroke="#2030a0" stroke-width="0.8" opacity="1"/><polygon points="287.5,102.5 290.0,100.0 290.0,107.0 287.5,109.5" fill="#2030a0" stroke="#2030a0" stroke-width="0.8" opacity="1"/><line x1="282.0" y1="108.0" x2="286.0" y2="104.0" stroke="#e0c020" stroke-width="1.3" opacity="1"/></g></svg>
</body></html>
